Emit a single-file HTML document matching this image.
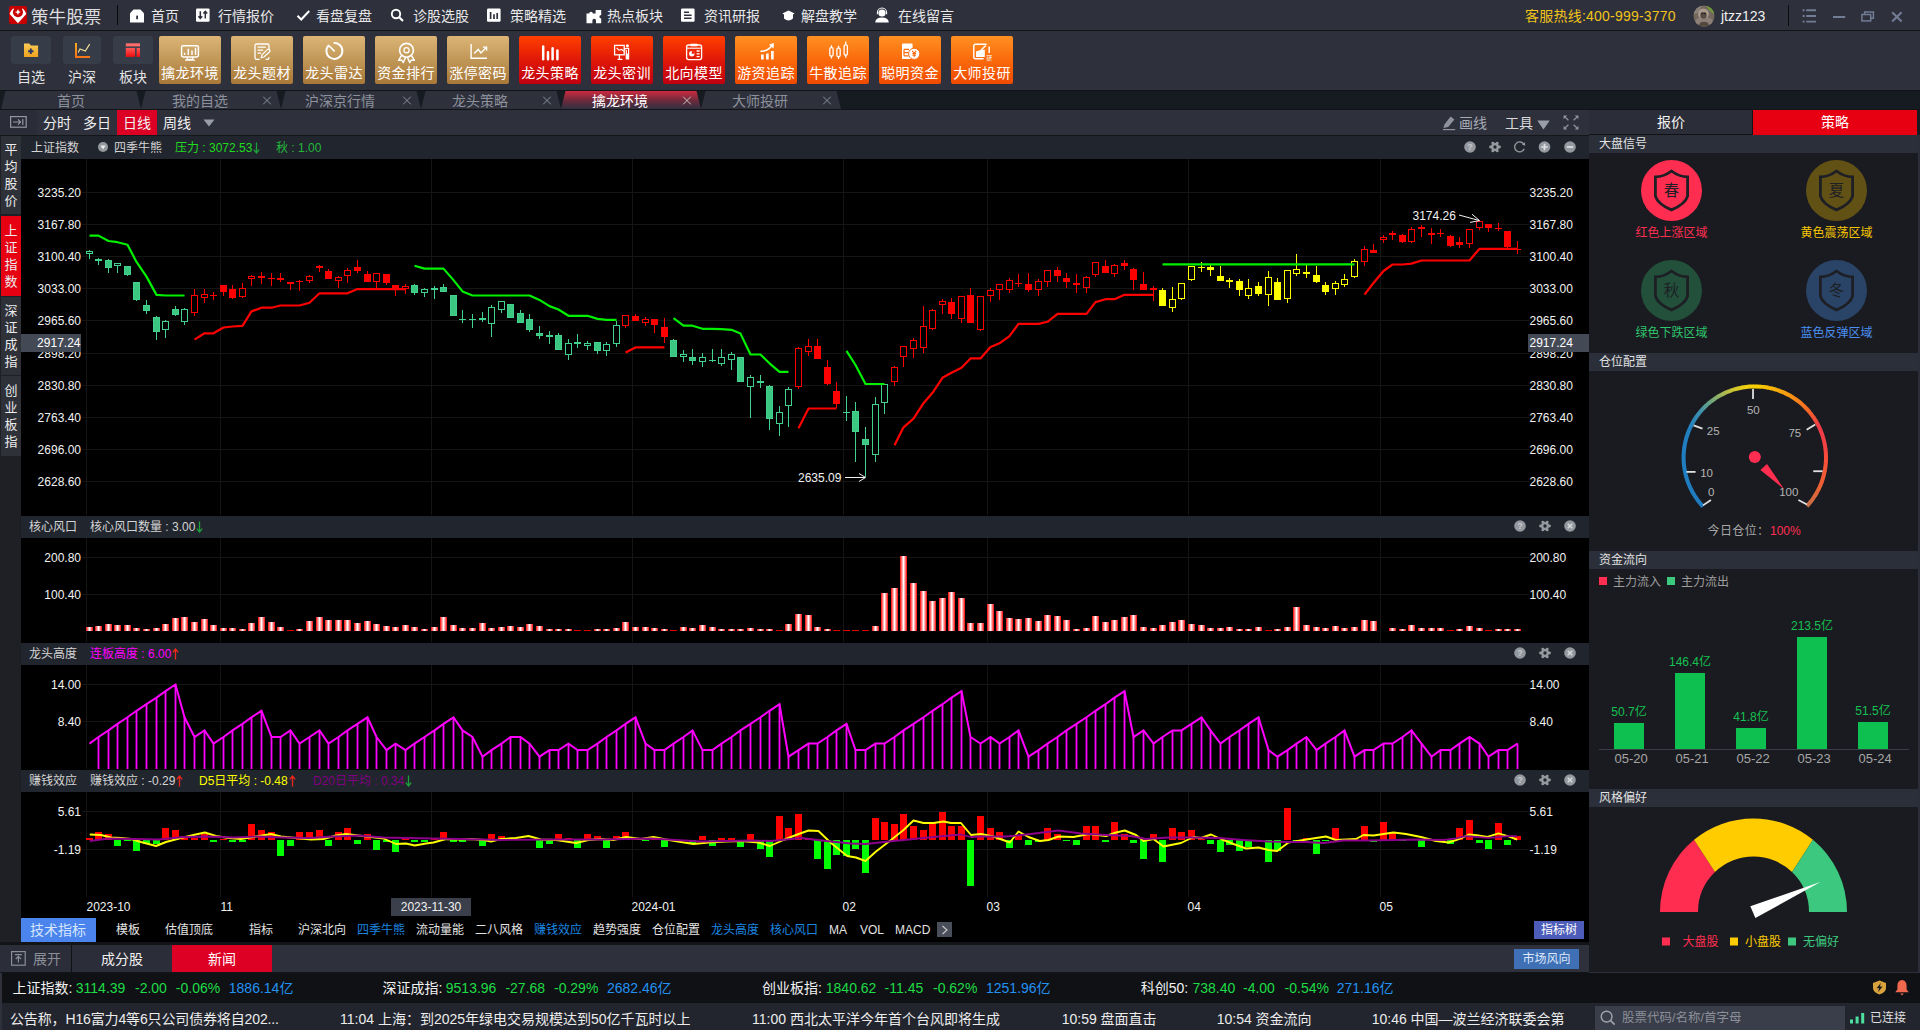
<!DOCTYPE html>
<html lang="zh-CN"><head><meta charset="utf-8"><title>策牛股票</title>
<style>
*{box-sizing:border-box;margin:0;padding:0}
html,body{width:1920px;height:1030px;overflow:hidden;background:#2e303c}
body{font-family:"Liberation Sans","Noto Sans CJK SC",sans-serif;font-size:12px;color:#e6e6e6;position:relative}
.a{position:absolute;white-space:nowrap}
svg{position:absolute;overflow:visible}
svg text{font-family:"Liberation Sans","Noto Sans CJK SC",sans-serif}

#tb{left:0;top:0;width:1920px;height:30px;background:#2e303c}
#tbl{left:0;top:30px;width:1920px;height:1px;background:#121317}
.mi{top:0;height:30px;line-height:32px;font-size:14px;color:#e8e8e8}
#brand{left:31px;top:1px;height:30px;line-height:32px;font-size:17.5px;color:#dcdcdc;font-weight:400;letter-spacing:0.1px}
#tool{left:0;top:31px;width:1920px;height:59px;background:#2e303c}
.sb{top:36px;height:27.6px;background:#363c48;border-radius:3px}
.sl{top:67px;height:20px;line-height:20px;font-size:14px;color:#e2e2e2;text-align:center}
.bb{top:36px;width:62px;height:48px;border-radius:2px}
.bb span{position:absolute;left:-4px;right:-4px;top:27px;height:20px;line-height:20px;text-align:center;font-size:14px;color:#fff;letter-spacing:0.4px}
.gold{background:linear-gradient(#dcb576,#c39a5a 45%,#a87838)}
.red{background:linear-gradient(#ff4000,#e01808 50%,#c00010)}
.org{background:linear-gradient(#ff9022,#fa6a0c 50%,#f04a00)}
#tabs{left:0;top:90px;width:1920px;height:20px;background:#161a21}
#tabs .tt{position:absolute;top:1px;height:18px;line-height:20px;font-size:14px;color:#8c919b;text-align:center;width:120px}
#pb{left:0;top:110px;width:1589px;height:25px;background:#2e303c}
#pbl{left:0;top:135px;width:1589px;height:1px;background:#14161a}
.pt{top:110px;height:25px;line-height:26px;font-size:14px;color:#f0f0f0}

#lstrip{left:0;top:136px;width:21px;height:809px;background:#1e2026}
.ls{left:1px;width:20px;font-size:13px;line-height:17px;text-align:center;color:#ececec;white-space:normal;display:flex;align-items:center;justify-content:center}
.ch{left:21px;width:1568px;height:22px;background:#21252d;line-height:22px;font-size:12px;color:#d4d4d4}
.ch span{position:absolute;top:0}
.ch .ar{position:static;vertical-align:-2px;margin-left:1px}
.blk{left:21px;width:1568px;background:#000}
.ind{top:918px;height:24px;line-height:24px;font-size:12px;color:#e4e4e4}

#rp{left:1589px;top:110px;width:331px;height:863px;background:#1a1b20}
.rh{left:1589px;width:329px;height:18px;background:#2b2f39;line-height:18px;font-size:12px;color:#e2e2e2;padding-left:10px}
.sg{width:120px;text-align:center;font-size:12px;height:16px;line-height:16px}
.rt{font-size:12px;height:16px;line-height:16px}

#bt{left:0;top:942px;width:1589px;height:31px;background:#121418}
#btb{left:0;top:945px;width:1589px;height:27px;background:#2e303c}
#ib{left:0;top:973px;width:1920px;height:30px;background:#0f1115}
#tk{left:0;top:1003px;width:1920px;height:27px;background:#22252e}
.it{top:973px;height:30px;line-height:30px;font-size:14px}
.tk{top:1005px;height:27px;line-height:28px;font-size:14px;color:#ececec}
</style></head>
<body>
<div class="a" id="tb"></div><div class="a" id="tbl"></div>
<svg style="left:9px;top:6px" width="18" height="18" viewBox="0 0 18 18"><rect width="18" height="18" rx="2.2" fill="#c90000"/><path d="M4.3 2.2C2.4 4 0.9 6.2 0.63 8.1L8.96 17.3L17.3 8.1C17 6.2 15.5 4 13.6 2.2L12.6 4L8.96 6L5.3 4Z" fill="#fff"/><circle cx="8.96" cy="6.3" r="5" fill="#c90000"/><path d="M8.96 3.1L9.9 5.15L11.95 6.1L9.9 7.05L8.96 9.1L8.02 7.05L5.97 6.1L8.02 5.15Z" fill="#fff"/></svg>
<div class="a" id="brand">策牛股票</div>
<div class="a" style="left:117px;top:5px;width:1px;height:20px;background:#08090b"></div>
<div class="a mi" style="left:151px">首页</div>
<div class="a mi" style="left:218px">行情报价</div>
<div class="a mi" style="left:316px">看盘复盘</div>
<div class="a mi" style="left:413px">诊股选股</div>
<div class="a mi" style="left:510px">策略精选</div>
<div class="a mi" style="left:607px">热点板块</div>
<div class="a mi" style="left:704px">资讯研报</div>
<div class="a mi" style="left:801px">解盘教学</div>
<div class="a mi" style="left:898px">在线留言</div>
<svg style="left:129px;top:8px" width="16" height="16" viewBox="0 0 16 16"><path d="M1 14.6V5.2L4.6 1.4H11.4L15 5.2V14.6Z" fill="#fff"/><rect x="7.2" y="7.6" width="1.8" height="3.6" fill="#2e303c"/></svg>
<svg style="left:196px;top:8px" width="14" height="14" viewBox="0 0 14 14"><rect x="0" y="0.5" width="13.6" height="13.2" rx="1.2" fill="#fff"/><path d="M4.3 3.2V10 M2.4 8.2L4.3 10.4L6.2 8.2 M9.3 10.6V3.8 M7.4 5.6L9.3 3.4L11.2 5.6" stroke="#2e303c" stroke-width="1.5" fill="none"/></svg>
<svg style="left:296px;top:9px" width="15" height="13" viewBox="0 0 15 13"><path d="M1.5 6.8L5.2 10.4L13.2 2" stroke="#fff" stroke-width="2.1" fill="none"/></svg>
<svg style="left:390px;top:8px" width="15" height="15" viewBox="0 0 15 15"><circle cx="6" cy="6" r="4.2" stroke="#fff" stroke-width="1.9" fill="none"/><path d="M9.2 9.2L13 13" stroke="#fff" stroke-width="2.2"/></svg>
<svg style="left:487px;top:8px" width="14" height="14" viewBox="0 0 14 14"><rect x="0" y="0.5" width="13.6" height="13.2" rx="1.2" fill="#fff"/><path d="M3.6 4V11 M7 6.2V11 M10.2 5V11" stroke="#2e303c" stroke-width="1.7"/></svg>
<svg style="left:586px;top:8px" width="16" height="16" viewBox="0 0 16 16"><path d="M0.5 5.5H3.2 A1.8 1.8 0 1 1 6.8 5.5 H9.6 V2 H15.2 V7 A1.8 1.8 0 1 0 15.2 10.6 V15.2 H10 V12.6 A1.8 1.8 0 1 0 6.4 12.6 V15.2 H0.5Z" fill="#fff"/></svg>
<svg style="left:681px;top:8px" width="14" height="14" viewBox="0 0 14 14"><rect x="0" y="0.5" width="13.6" height="13.2" rx="1.2" fill="#fff"/><path d="M3 4.2H8 M3 7.2H10.6 M3 10.2H10.6" stroke="#2e303c" stroke-width="1.6"/></svg>
<svg style="left:782px;top:10px" width="13" height="12" viewBox="0 0 13 12"><path d="M0.3 3.6L6.5 0.6L12.7 3.6L11 4.6V8.6Q6.5 12.6 2 8.6V4.6Z" fill="#fff"/></svg>
<svg style="left:874px;top:8px" width="16" height="15" viewBox="0 0 16 15"><circle cx="8" cy="5" r="3.6" fill="#fff"/><path d="M1.2 14.4Q1.6 9.6 8 9.6Q14.4 9.6 14.8 14.4Z" fill="#fff"/><path d="M3.4 6.2V4.6A4.6 4.6 0 0 1 12.6 4.6V6.2" stroke="#fff" stroke-width="1.1" fill="none"/></svg>
<div class="a mi" style="left:1525px;color:#f2c41a;letter-spacing:0.22px">客服热线:400-999-3770</div>
<svg style="left:1693px;top:5px" width="22" height="22" viewBox="0 0 22 22"><defs><clipPath id="avc"><circle cx="11" cy="11" r="10.5"/></clipPath></defs><g clip-path="url(#avc)"><rect width="22" height="22" fill="#75695f"/><path d="M13 0H22V9Q17 8 13 0Z" fill="#6f9838"/><path d="M0 0H9L6 7L0 10Z" fill="#8a8178"/><ellipse cx="10.5" cy="9" rx="5.4" ry="5.6" fill="#a89a8c"/><ellipse cx="10.5" cy="10.4" rx="3.2" ry="3.4" fill="#5a4c44"/><path d="M1 22Q2 12 7 13Q11 17 15 13Q20 12 21 22Z" fill="#8c8078"/><path d="M5 22Q7 16 11 17Q15 16 17 22Z" fill="#54483f"/><circle cx="9" cy="8.6" r="0.8" fill="#1e1a18"/><circle cx="12" cy="8.6" r="0.8" fill="#1e1a18"/></g></svg>
<div class="a mi" style="left:1721px;color:#f0f0f0">jtzz123</div>
<div class="a" style="left:1788px;top:5px;width:1px;height:21px;background:#0c0d10"></div>
<svg style="left:1802px;top:9px" width="15" height="14" viewBox="0 0 15 14"><path d="M0.6 1.2H2.6 M4.2 1.2H14 M0.6 7H2.6 M4.2 7H14 M0.6 12.6H2.6 M4.2 12.6H14" stroke="#727c94" stroke-width="1.9"/></svg>
<svg style="left:1833px;top:15.5px" width="13" height="3"><rect width="12.2" height="2" fill="#727c94"/></svg>
<svg style="left:1861px;top:10.5px" width="14" height="12" viewBox="0 0 14 12"><path d="M3.6 3V0.9H12.4V7.2H10" stroke="#727c94" stroke-width="1.5" fill="none"/><rect x="0.9" y="3.5" width="8.8" height="6.4" stroke="#727c94" stroke-width="1.5" fill="none"/></svg>
<svg style="left:1891px;top:10.5px" width="12" height="12" viewBox="0 0 12 12"><path d="M1.2 1.2L10.6 10.6M10.6 1.2L1.2 10.6" stroke="#727c94" stroke-width="2.1"/></svg>
<div class="a" id="tool"></div>
<div class="a sb" style="left:11.3px;width:39.7px"></div>
<div class="a sb" style="left:63px;width:38px"></div>
<div class="a sb" style="left:113.2px;width:39.7px"></div>
<div class="a sl" style="left:11px;width:40px">自选</div>
<div class="a sl" style="left:63px;width:38px">沪深</div>
<div class="a sl" style="left:113px;width:40px">板块</div>
<svg style="left:0;top:31px" width="160" height="59"><defs><linearGradient id="fg" x1="0" y1="0" x2="0" y2="1"><stop offset="0" stop-color="#f9cc58"/><stop offset="1" stop-color="#f0a21e"/></linearGradient><linearGradient id="og" x1="0" y1="0" x2="0" y2="1"><stop offset="0" stop-color="#f8ac20"/><stop offset="1" stop-color="#f87416"/></linearGradient><linearGradient id="rg" x1="0" y1="0" x2="0" y2="1"><stop offset="0" stop-color="#ff5a5a"/><stop offset="1" stop-color="#ee0c0c"/></linearGradient></defs><path d="M24 12.4H29.2L31 14.4H38.1V26H24Z" fill="url(#fg)"/><path d="M30.8 17.6V23M28.1 20.3H33.5" stroke="#2a3762" stroke-width="1.9"/><path d="M76 11.9V26H90.1" stroke="url(#og)" stroke-width="2" fill="none"/><path d="M78.2 21.6L80 18L85.3 20L89.7 13.1" stroke="#f0dc92" stroke-width="1.2" fill="none"/><rect x="125.8" y="12.3" width="14.2" height="3.1" fill="#ff6c6c"/><rect x="125.8" y="16.9" width="9.3" height="9" fill="url(#rg)"/><rect x="136.6" y="16.9" width="3.4" height="9" fill="url(#rg)"/></svg>
<div class="a bb gold" style="left:159px"><svg style="left:0;top:0" width="62" height="48" viewBox="0 0 62 48" fill="none" stroke="#fff" stroke-width="1.5"><rect x="22.6" y="9.7" width="16.8" height="11.2" rx="1.6"/><path d="M28.2 21V23.4H33.8V21M26 24.2H36" stroke-width="1.3"/><path d="M25.6 18.9V16.8M29.3 18.9V12.8M33 18.9V14.4M36.5 18.9V11.8" stroke-width="1.5"/></svg><span>擒龙环境</span></div>
<div class="a bb gold" style="left:231px"><svg style="left:0;top:0" width="62" height="48" viewBox="0 0 62 48" fill="none" stroke="#fff" stroke-width="1.5"><path d="M38 14.6V9.6Q38 8 36.4 8H25.6Q24 8 24 9.6V21.8Q24 23.4 25.6 23.4H28.6M34.6 23.4H36.4Q38 23.4 38 21.8V21.2" stroke-width="1.3"/><path d="M26.6 11.2H34.8M26.6 14.2H32.2M26.6 17.2H30" stroke-width="1.3"/><path d="M30.2 21.6L31 18.8L36.6 13.4Q37.4 12.8 38.2 13.6L38.8 14.2Q39.4 15 38.6 15.8L33 21Z" stroke-width="1.2" fill="#c9a05e"/></svg><span>龙头题材</span></div>
<div class="a bb gold" style="left:303px"><svg style="left:0;top:0" width="62" height="48" viewBox="0 0 62 48" fill="none" stroke="#fff" stroke-width="1.5"><path d="M31.3 6.9A8 8 0 1 1 25.4 9.6" stroke-width="1.9" stroke-linecap="round"/><path d="M26.2 10L31.2 14.8" stroke-width="1.7" stroke-linecap="round"/></svg><span>龙头雷达</span></div>
<div class="a bb gold" style="left:375px"><svg style="left:0;top:0" width="62" height="48" viewBox="0 0 62 48" fill="none" stroke="#fff" stroke-width="1.5"><circle cx="31.5" cy="14.3" r="6.9" stroke-width="1.6"/><circle cx="31.5" cy="14.3" r="2.6" stroke-width="1.2"/><path d="M26.6 19.4L23.6 24.4L26.8 24L28.2 26.6L30.6 21.4M36.4 19.4L39.4 24.4L36.2 24L34.8 26.6L32.4 21.4" stroke-width="1.4" stroke-linejoin="round"/></svg><span>资金排行</span></div>
<div class="a bb gold" style="left:447px"><svg style="left:0;top:0" width="62" height="48" viewBox="0 0 62 48" fill="none" stroke="#fff" stroke-width="1.5"><path d="M24.1 8V22.3H40" stroke-width="1.4"/><path d="M27.2 17.4L31.2 13.4L34 17L39.2 11.6" stroke-width="1.4"/><path d="M36 11.2L39.6 11.2L39.6 14.8" stroke-width="1.3"/></svg><span>涨停密码</span></div>
<div class="a bb red" style="left:519px"><svg style="left:0;top:0" width="62" height="48" viewBox="0 0 62 48" fill="none" stroke="#fff" stroke-width="1.5"><path d="M24.2 10.4V23.3M29 16.2V23.3M33.6 12.2V23.3M38.4 14.6V23.3" stroke-width="2.5" stroke-linecap="round"/></svg><span>龙头策略</span></div>
<div class="a bb red" style="left:591px"><svg style="left:0;top:0" width="62" height="48" viewBox="0 0 62 48" fill="none" stroke="#fff" stroke-width="1.5"><rect x="23.6" y="9.4" width="9.6" height="9.4" stroke-width="1.3"/><path d="M28.4 18.8V23M26.6 23.3H31.4" stroke-width="1.3"/><path d="M25.6 11.8L28 14.2L30.6 13.4L32.8 15.2" stroke-width="1.1"/><circle cx="36.4" cy="9.8" r="1.5" fill="#fff" stroke="none"/><path d="M33 13.4L35.2 12.4H37.6V23.4M35.3 14V23.4M36.4 17.6V23.4" stroke-width="1.2"/></svg><span>龙头密训</span></div>
<div class="a bb red" style="left:663px"><svg style="left:0;top:0" width="62" height="48" viewBox="0 0 62 48" fill="none" stroke="#fff" stroke-width="1.5"><rect x="23.6" y="9" width="15" height="14.6" rx="2" stroke-width="1.3"/><path d="M27.8 8.2H34.2V9.8H27.8Z" fill="#fff" stroke-width="1"/><path d="M23.6 12.2H38.6" stroke-width="1.1"/><circle cx="28.8" cy="17.8" r="2.7" fill="#fff" stroke="none"/><path d="M28.8 17.8V15.1A2.7 2.7 0 0 1 31.5 17.8Z" fill="#e61a08" stroke="none"/><path d="M33.6 15H36.6M33.6 17.8H36.6M33.6 20.6H36.6" stroke-width="1.3"/></svg><span>北向模型</span></div>
<div class="a bb org" style="left:735px"><svg style="left:0;top:0" width="62" height="48" viewBox="0 0 62 48" fill="none" stroke="#fff" stroke-width="1.5"><path d="M27.4 18.6V23.4M32.4 17.4V23.4M37.4 15V23.4" stroke-width="2.6"/><path d="M25.4 15.2Q32 15.6 37.2 9.4" stroke-width="1.5"/><path d="M34.6 8.8L38.6 7.6L38.2 11.8Z" fill="#fff" stroke-width="0.8"/></svg><span>游资追踪</span></div>
<div class="a bb org" style="left:807px"><svg style="left:0;top:0" width="62" height="48" viewBox="0 0 62 48" fill="none" stroke="#fff" stroke-width="1.5"><rect x="22.8" y="11.6" width="3.3" height="8.4" rx="1.3" stroke-width="1.3"/><path d="M24.45 9.2V11.6M24.45 20V22.4" stroke-width="1.3"/><rect x="29.9" y="12.2" width="3.3" height="8.4" rx="1.3" stroke-width="1.3"/><path d="M31.55 9.8V12.2M31.55 20.6V23" stroke-width="1.3"/><rect x="37.1" y="8.8" width="3.3" height="10.2" rx="1.3" stroke-width="1.3"/><path d="M38.75 5.4V8.8M38.75 19V21.8" stroke-width="1.3"/></svg><span>牛散追踪</span></div>
<div class="a bb org" style="left:879px"><svg style="left:0;top:0" width="62" height="48" viewBox="0 0 62 48" fill="none" stroke="#fff" stroke-width="1.5"><path d="M23 8.6Q23 7.6 24 7.6H32.6Q33.6 7.6 33.6 8.6V23H23Z" fill="#fff" stroke="none"/><path d="M25 13.4H30M25 16.6H29.4M25 19.8H29.4M25 13.4V19.8" stroke="#fb6c12" stroke-width="1.2"/><circle cx="35.2" cy="17.8" r="5.6" fill="#fff" stroke="#fb6c12" stroke-width="1"/><path d="M33.2 14.8L35.2 17.4L37.2 14.8M35.2 17.4V21.2M33.4 17.6H37M33.4 19.2H37" stroke="#fb6c12" stroke-width="1.1"/></svg><span>聪明资金</span></div>
<div class="a bb org" style="left:951px"><svg style="left:0;top:0" width="62" height="48" viewBox="0 0 62 48" fill="none" stroke="#fff" stroke-width="1.5"><path d="M35.6 8.2H24.6Q22.8 8.2 22.8 10V21Q22.8 22.8 24.6 22.8H32.6M38.2 10.6V17" stroke-width="1.4"/><path d="M25 21V15.4L30 13.8H33.8V21Z" fill="#fff" stroke="none"/><path d="M30.2 14L34.8 9.6" stroke-width="1.4"/><text x="35.4" y="23.6" font-size="5.6" fill="#fff" stroke="none">研</text></svg><span>大师投研</span></div>
<div class="a" id="tabs"><svg style="left:0;top:0" width="1920" height="20">
<defs><linearGradient id="atg" x1="0" y1="0" x2="0" y2="1"><stop offset="0" stop-color="#cc2a40"/><stop offset="0.55" stop-color="#6a2a3c"/><stop offset="1" stop-color="#2f3040"/></linearGradient></defs>
<polygon points="5.5,1 136.5,1 141,19 1,19" fill="#2e303c"/>
<polygon points="145.5,1 276.5,1 281,19 141,19" fill="#2e303c"/>
<polygon points="285.5,1 416.5,1 421,19 281,19" fill="#2e303c"/>
<polygon points="425.5,1 556.5,1 561,19 421,19" fill="#2e303c"/>
<polygon points="565.5,1 696.5,1 701,19 561,19" fill="url(#atg)"/>
<polygon points="705.5,1 836.5,1 841,19 701,19" fill="#2e303c"/>
<rect x="0" y="0" width="1920" height="1" fill="#111317"/><rect x="0" y="19" width="1920" height="1" fill="#111317"/>
<path d="M263.2 6.7L270.8 14.3M270.8 6.7L263.2 14.3" stroke="#8c919b" stroke-width="1"/>
<path d="M403.2 6.7L410.8 14.3M410.8 6.7L403.2 14.3" stroke="#8c919b" stroke-width="1"/>
<path d="M543.2 6.7L550.8 14.3M550.8 6.7L543.2 14.3" stroke="#8c919b" stroke-width="1"/>
<path d="M683.2 6.7L690.8 14.3M690.8 6.7L683.2 14.3" stroke="#c8c8c8" stroke-width="1"/>
<path d="M823.2 6.7L830.8 14.3M830.8 6.7L823.2 14.3" stroke="#8c919b" stroke-width="1"/>
</svg>
<div class="tt" style="left:11px;">首页</div>
<div class="tt" style="left:140px;">我的自选</div>
<div class="tt" style="left:280px;">沪深京行情</div>
<div class="tt" style="left:420px;">龙头策略</div>
<div class="tt" style="left:560px;color:#fff;">擒龙环境</div>
<div class="tt" style="left:700px;">大师投研</div>
</div>
<div class="a" id="pb"></div><div class="a" id="pbl"></div>
<div class="a" style="left:0;top:110px;width:37px;height:25px;background:#2a2c37"></div>
<svg style="left:10px;top:116px" width="17" height="12" viewBox="0 0 17 12"><rect x="0.6" y="0.6" width="15.6" height="10.6" fill="none" stroke="#9498a2" stroke-width="1.2"/><path d="M3 6H10.4M8 3.4L10.6 6L8 8.6M12.8 3V9" stroke="#9498a2" stroke-width="1.2" fill="none"/></svg>
<div class="a" style="left:117px;top:110px;width:40px;height:25px;background:#dc0024"></div>
<div class="a pt" style="left:43px">分时</div>
<div class="a pt" style="left:83px">多日</div>
<div class="a pt" style="left:123px">日线</div>
<div class="a pt" style="left:163px">周线</div>
<svg style="left:203px;top:119px" width="12" height="8"><path d="M0.5 0.5H11.5L6 7.5Z" fill="#9a9ea8"/></svg>
<svg style="left:0;top:0" width="1920" height="140"><path d="M1443.4 128L1444.6 124.2L1450.6 116.6L1454.4 119.6L1448.2 127Z" fill="#8e929c"/><path d="M1443 129.6H1455.2" stroke="#8e929c" stroke-width="1.2"/></svg>
<div class="a pt" style="left:1459px;color:#a6aab2">画线</div>
<div class="a pt" style="left:1505px;color:#d8d8d8">工具</div>
<svg style="left:1537px;top:120px" width="13" height="10"><path d="M0.3 0.5H12.7L6.5 9.5Z" fill="#9a9ea8"/></svg>
<svg style="left:1563px;top:115px" width="16" height="15" viewBox="0 0 16 15"><path d="M1 1L5.4 5.2M15 1L10.6 5.2M1 14L5.4 9.8M15 14L10.6 9.8" stroke="#8e929c" stroke-width="1.2"/><path d="M0.6 0.6H4.2L0.6 4.2ZM15.4 0.6H11.8L15.4 4.2ZM0.6 14.4H4.2L0.6 10.8ZM15.4 14.4H11.8L15.4 10.8Z" fill="#8e929c"/></svg><div class="a" id="lstrip"></div>
<div class="a ls" style="top:136px;height:78px;padding-bottom:0;background:#2f3139"><div>平<br>均<br>股<br>价</div></div>
<div class="a ls" style="top:216px;height:80px;padding-bottom:0;background:#e60012"><div>上<br>证<br>指<br>数</div></div>
<div class="a ls" style="top:297px;height:78px;padding-bottom:0;background:#2f3139"><div>深<br>证<br>成<br>指</div></div>
<div class="a ls" style="top:376px;height:80px;padding-bottom:0;background:#2f3139"><div>创<br>业<br>板<br>指</div></div>
<div class="a blk" style="top:159px;height:357px"></div>
<div class="a blk" style="top:538px;height:105px"></div>
<div class="a blk" style="top:665px;height:105px"></div>
<div class="a blk" style="top:792px;height:153px"></div>
<div class="a ch" style="top:136px;height:23px;line-height:25px"><span style="left:10px">上证指数</span><span style="left:93px">四季牛熊</span><span style="left:154px;color:#1fdc1f">压力 : 3072.53<svg class="ar" width="7" height="12" viewBox="0 0 7 12"><path d="M3.5 0.5V10.5M0.8 7.6L3.5 11L6.2 7.6" stroke="#1fa03c" stroke-width="1.3" fill="none"/></svg></span><span style="left:255px;color:#22b83c">秋 : 1.00</span></div>
<div class="a ch" style="top:516px"><span style="left:8px">核心风口</span><span style="left:69px">核心风口数量 : 3.00<svg class="ar" width="7" height="12" viewBox="0 0 7 12"><path d="M3.5 0.5V10.5M0.8 7.6L3.5 11L6.2 7.6" stroke="#1fa03c" stroke-width="1.3" fill="none"/></svg></span></div>
<div class="a ch" style="top:643px"><span style="left:8px">龙头高度</span><span style="left:69px;color:#ff00ff">连板高度 : 6.00<svg class="ar" width="7" height="12" viewBox="0 0 7 12"><path d="M3.5 11.5V1.5M0.8 4.4L3.5 1L6.2 4.4" stroke="#f0281c" stroke-width="1.3" fill="none"/></svg></span></div>
<div class="a ch" style="top:770px"><span style="left:8px">赚钱效应</span><span style="left:69px">赚钱效应 : -0.29<svg class="ar" width="7" height="12" viewBox="0 0 7 12"><path d="M3.5 11.5V1.5M0.8 4.4L3.5 1L6.2 4.4" stroke="#f0281c" stroke-width="1.3" fill="none"/></svg></span><span style="left:178px;color:#ffff00">D5日平均 : -0.48<svg class="ar" width="7" height="12" viewBox="0 0 7 12"><path d="M3.5 11.5V1.5M0.8 4.4L3.5 1L6.2 4.4" stroke="#f0281c" stroke-width="1.3" fill="none"/></svg></span><span style="left:292px;color:#800080">D20日平均 : 0.34<svg class="ar" width="7" height="12" viewBox="0 0 7 12"><path d="M3.5 0.5V10.5M0.8 7.6L3.5 11L6.2 7.6" stroke="#1fa03c" stroke-width="1.3" fill="none"/></svg></span></div>
<svg style="left:0;top:0" width="1920" height="1030"><circle cx="103" cy="147" r="5" fill="#94989f"/><path d="M100.4 145.6H105.6L103 149.4Z" fill="#ececec"/><circle cx="1470" cy="147" r="5.8" fill="#94989f"/><text x="1470" y="150.4" font-size="9" font-weight="bold" fill="#c8cbd0" text-anchor="middle">?</text><circle cx="1495" cy="147" r="2.9" fill="none" stroke="#94989f" stroke-width="2.5"/><circle cx="1499.50" cy="147.00" r="1.45" fill="#94989f"/><circle cx="1497.25" cy="150.90" r="1.45" fill="#94989f"/><circle cx="1492.75" cy="150.90" r="1.45" fill="#94989f"/><circle cx="1490.50" cy="147.00" r="1.45" fill="#94989f"/><circle cx="1492.75" cy="143.10" r="1.45" fill="#94989f"/><circle cx="1497.25" cy="143.10" r="1.45" fill="#94989f"/><path d="M1524.1 144.6A5 5 0 1 0 1524.3 148.8" fill="none" stroke="#94989f" stroke-width="1.3"/><path d="M1521.9 144.8L1525.3 145.8L1524.9 142.2Z" fill="#94989f"/><circle cx="1544.5" cy="147" r="5.8" fill="#94989f"/><path d="M1541.3 147H1547.7M1544.5 143.8V150.2" stroke="#dfe1e5" stroke-width="1.7"/><circle cx="1570" cy="147" r="5.8" fill="#94989f"/><path d="M1566.8 147H1573.2" stroke="#dfe1e5" stroke-width="1.7"/><circle cx="1520" cy="526" r="5.8" fill="#94989f"/><text x="1520" y="529.4" font-size="9" font-weight="bold" fill="#c8cbd0" text-anchor="middle">?</text><circle cx="1545" cy="526" r="2.9" fill="none" stroke="#94989f" stroke-width="2.5"/><circle cx="1549.50" cy="526.00" r="1.45" fill="#94989f"/><circle cx="1547.25" cy="529.90" r="1.45" fill="#94989f"/><circle cx="1542.75" cy="529.90" r="1.45" fill="#94989f"/><circle cx="1540.50" cy="526.00" r="1.45" fill="#94989f"/><circle cx="1542.75" cy="522.10" r="1.45" fill="#94989f"/><circle cx="1547.25" cy="522.10" r="1.45" fill="#94989f"/><circle cx="1570" cy="526" r="5.8" fill="#94989f"/><path d="M1567.7 523.7L1572.3 528.3M1572.3 523.7L1567.7 528.3" stroke="#d8dade" stroke-width="1.4"/><circle cx="1520" cy="653" r="5.8" fill="#94989f"/><text x="1520" y="656.4" font-size="9" font-weight="bold" fill="#c8cbd0" text-anchor="middle">?</text><circle cx="1545" cy="653" r="2.9" fill="none" stroke="#94989f" stroke-width="2.5"/><circle cx="1549.50" cy="653.00" r="1.45" fill="#94989f"/><circle cx="1547.25" cy="656.90" r="1.45" fill="#94989f"/><circle cx="1542.75" cy="656.90" r="1.45" fill="#94989f"/><circle cx="1540.50" cy="653.00" r="1.45" fill="#94989f"/><circle cx="1542.75" cy="649.10" r="1.45" fill="#94989f"/><circle cx="1547.25" cy="649.10" r="1.45" fill="#94989f"/><circle cx="1570" cy="653" r="5.8" fill="#94989f"/><path d="M1567.7 650.7L1572.3 655.3M1572.3 650.7L1567.7 655.3" stroke="#d8dade" stroke-width="1.4"/><circle cx="1520" cy="780" r="5.8" fill="#94989f"/><text x="1520" y="783.4" font-size="9" font-weight="bold" fill="#c8cbd0" text-anchor="middle">?</text><circle cx="1545" cy="780" r="2.9" fill="none" stroke="#94989f" stroke-width="2.5"/><circle cx="1549.50" cy="780.00" r="1.45" fill="#94989f"/><circle cx="1547.25" cy="783.90" r="1.45" fill="#94989f"/><circle cx="1542.75" cy="783.90" r="1.45" fill="#94989f"/><circle cx="1540.50" cy="780.00" r="1.45" fill="#94989f"/><circle cx="1542.75" cy="776.10" r="1.45" fill="#94989f"/><circle cx="1547.25" cy="776.10" r="1.45" fill="#94989f"/><circle cx="1570" cy="780" r="5.8" fill="#94989f"/><path d="M1567.7 777.7L1572.3 782.3M1572.3 777.7L1567.7 782.3" stroke="#d8dade" stroke-width="1.4"/></svg>
<svg style="left:0;top:0" width="1920" height="1030" shape-rendering="crispEdges"><path d="M86.5 159V515" stroke="#151515" stroke-width="1"/><path d="M220.5 159V515" stroke="#151515" stroke-width="1"/><path d="M431.5 159V515" stroke="#151515" stroke-width="1"/><path d="M632.5 159V515" stroke="#151515" stroke-width="1"/><path d="M843.5 159V515" stroke="#151515" stroke-width="1"/><path d="M987.5 159V515" stroke="#151515" stroke-width="1"/><path d="M1188.5 159V515" stroke="#151515" stroke-width="1"/><path d="M1380.5 159V515" stroke="#151515" stroke-width="1"/><path d="M82 192.5H1529" stroke="#151515" stroke-width="1"/><path d="M82 224.5H1529" stroke="#151515" stroke-width="1"/><path d="M82 256.5H1529" stroke="#151515" stroke-width="1"/><path d="M82 288.5H1529" stroke="#151515" stroke-width="1"/><path d="M82 320.5H1529" stroke="#151515" stroke-width="1"/><path d="M82 353.5H1529" stroke="#151515" stroke-width="1"/><path d="M82 385.5H1529" stroke="#151515" stroke-width="1"/><path d="M82 417.5H1529" stroke="#151515" stroke-width="1"/><path d="M82 449.5H1529" stroke="#151515" stroke-width="1"/><path d="M82 481.5H1529" stroke="#151515" stroke-width="1"/><g shape-rendering="auto"><text x="81" y="196.9" font-size="12" fill="#f2f2f2" text-anchor="end">3235.20</text><text x="1529.5" y="196.9" font-size="12" fill="#f2f2f2">3235.20</text><text x="81" y="228.9" font-size="12" fill="#f2f2f2" text-anchor="end">3167.80</text><text x="1529.5" y="228.9" font-size="12" fill="#f2f2f2">3167.80</text><text x="81" y="260.9" font-size="12" fill="#f2f2f2" text-anchor="end">3100.40</text><text x="1529.5" y="260.9" font-size="12" fill="#f2f2f2">3100.40</text><text x="81" y="292.9" font-size="12" fill="#f2f2f2" text-anchor="end">3033.00</text><text x="1529.5" y="292.9" font-size="12" fill="#f2f2f2">3033.00</text><text x="81" y="324.9" font-size="12" fill="#f2f2f2" text-anchor="end">2965.60</text><text x="1529.5" y="324.9" font-size="12" fill="#f2f2f2">2965.60</text><text x="81" y="357.9" font-size="12" fill="#f2f2f2" text-anchor="end">2898.20</text><text x="1529.5" y="357.9" font-size="12" fill="#f2f2f2">2898.20</text><text x="81" y="389.9" font-size="12" fill="#f2f2f2" text-anchor="end">2830.80</text><text x="1529.5" y="389.9" font-size="12" fill="#f2f2f2">2830.80</text><text x="81" y="421.9" font-size="12" fill="#f2f2f2" text-anchor="end">2763.40</text><text x="1529.5" y="421.9" font-size="12" fill="#f2f2f2">2763.40</text><text x="81" y="453.9" font-size="12" fill="#f2f2f2" text-anchor="end">2696.00</text><text x="1529.5" y="453.9" font-size="12" fill="#f2f2f2">2696.00</text><text x="81" y="485.9" font-size="12" fill="#f2f2f2" text-anchor="end">2628.60</text><text x="1529.5" y="485.9" font-size="12" fill="#f2f2f2">2628.60</text></g><rect x="21" y="334" width="60" height="18" fill="#444956"/><rect x="1528" y="334" width="61" height="18" fill="#444956"/><g shape-rendering="auto"><text x="80.5" y="347.4" font-size="12" fill="#fff" text-anchor="end">2917.24</text><text x="1529.5" y="347.4" font-size="12" fill="#fff">2917.24</text></g><rect x="89" y="250" width="1" height="9" fill="#43d28d"/><rect x="86.5" y="251.5" width="6" height="2" fill="#000" stroke="#43d28d" stroke-width="1"/><rect x="98" y="258" width="1" height="7" fill="#43d28d"/><rect x="95" y="259" width="7" height="2" fill="#43d28d"/><rect x="108" y="259" width="1" height="14" fill="#43d28d"/><rect x="105.5" y="260.5" width="6" height="7" fill="#3bc781" stroke="#43d28d" stroke-width="1"/><rect x="117" y="263" width="1" height="10" fill="#43d28d"/><rect x="114.5" y="263.5" width="6" height="2" fill="#000" stroke="#43d28d" stroke-width="1"/><rect x="127" y="266" width="1" height="10" fill="#43d28d"/><rect x="124.5" y="266.5" width="6" height="8" fill="#3bc781" stroke="#43d28d" stroke-width="1"/><rect x="136" y="282" width="1" height="19" fill="#43d28d"/><rect x="133.5" y="282.5" width="6" height="17" fill="#3bc781" stroke="#43d28d" stroke-width="1"/><rect x="146" y="300" width="1" height="14" fill="#43d28d"/><rect x="143.5" y="305.5" width="6" height="5" fill="#3bc781" stroke="#43d28d" stroke-width="1"/><rect x="156" y="316" width="1" height="24" fill="#43d28d"/><rect x="153.5" y="317.5" width="6" height="14" fill="#3bc781" stroke="#43d28d" stroke-width="1"/><rect x="165" y="320" width="1" height="18" fill="#43d28d"/><rect x="162.5" y="321.5" width="6" height="8" fill="#000" stroke="#43d28d" stroke-width="1"/><rect x="175" y="306" width="1" height="10" fill="#43d28d"/><rect x="172.5" y="309.5" width="6" height="5" fill="#3bc781" stroke="#43d28d" stroke-width="1"/><rect x="184" y="308" width="1" height="17" fill="#43d28d"/><rect x="181.5" y="309.5" width="6" height="12" fill="#000" stroke="#43d28d" stroke-width="1"/><rect x="194" y="289" width="1" height="27" fill="#ff0000"/><rect x="191.5" y="295.5" width="6" height="17" fill="#000" stroke="#ff0000" stroke-width="1"/><rect x="204" y="289" width="1" height="14" fill="#ff0000"/><rect x="201.5" y="294.5" width="6" height="3" fill="#000" stroke="#ff0000" stroke-width="1"/><rect x="213" y="292" width="1" height="8" fill="#ff0000"/><rect x="210" y="295" width="7" height="1" fill="#ff0000"/><rect x="223" y="285" width="1" height="11" fill="#ff0000"/><rect x="220.5" y="285.5" width="6" height="6" fill="#ff0000" stroke="#ff0000" stroke-width="1"/><rect x="232" y="285" width="1" height="14" fill="#ff0000"/><rect x="229.5" y="289.5" width="6" height="8" fill="#ff0000" stroke="#ff0000" stroke-width="1"/><rect x="242" y="283" width="1" height="15" fill="#ff0000"/><rect x="239.5" y="288.5" width="6" height="8" fill="#000" stroke="#ff0000" stroke-width="1"/><rect x="251" y="275" width="1" height="11" fill="#ff0000"/><rect x="248.5" y="276.5" width="6" height="2" fill="#000" stroke="#ff0000" stroke-width="1"/><rect x="261" y="272" width="1" height="12" fill="#ff0000"/><rect x="258" y="276" width="7" height="2" fill="#ff0000"/><rect x="271" y="273" width="1" height="13" fill="#ff0000"/><rect x="268" y="278" width="7" height="1" fill="#ff0000"/><rect x="280" y="273" width="1" height="9" fill="#ff0000"/><rect x="277" y="278" width="7" height="2" fill="#ff0000"/><rect x="290" y="282" width="1" height="8" fill="#ff0000"/><rect x="287" y="282" width="7" height="2" fill="#ff0000"/><rect x="299" y="280" width="1" height="11" fill="#ff0000"/><rect x="296" y="281" width="7" height="1" fill="#ff0000"/><rect x="309" y="275" width="1" height="8" fill="#ff0000"/><rect x="306.5" y="276.5" width="6" height="4" fill="#000" stroke="#ff0000" stroke-width="1"/><rect x="319" y="265" width="1" height="7" fill="#ff0000"/><rect x="316" y="266" width="7" height="2" fill="#ff0000"/><rect x="328" y="269" width="1" height="10" fill="#ff0000"/><rect x="325.5" y="271.5" width="6" height="7" fill="#ff0000" stroke="#ff0000" stroke-width="1"/><rect x="338" y="276" width="1" height="12" fill="#ff0000"/><rect x="335.5" y="277.5" width="6" height="3" fill="#000" stroke="#ff0000" stroke-width="1"/><rect x="347" y="268" width="1" height="15" fill="#ff0000"/><rect x="344.5" y="270.5" width="6" height="5" fill="#000" stroke="#ff0000" stroke-width="1"/><rect x="357" y="260" width="1" height="13" fill="#ff0000"/><rect x="354.5" y="267.5" width="6" height="3" fill="#ff0000" stroke="#ff0000" stroke-width="1"/><rect x="367" y="271" width="1" height="11" fill="#ff0000"/><rect x="364.5" y="274.5" width="6" height="7" fill="#ff0000" stroke="#ff0000" stroke-width="1"/><rect x="376" y="273" width="1" height="15" fill="#ff0000"/><rect x="373.5" y="273.5" width="6" height="8" fill="#000" stroke="#ff0000" stroke-width="1"/><rect x="386" y="274" width="1" height="11" fill="#ff0000"/><rect x="383.5" y="274.5" width="6" height="8" fill="#ff0000" stroke="#ff0000" stroke-width="1"/><rect x="395" y="285" width="1" height="11" fill="#ff0000"/><rect x="392.5" y="285.5" width="6" height="2" fill="#ff0000" stroke="#ff0000" stroke-width="1"/><rect x="405" y="284" width="1" height="10" fill="#ff0000"/><rect x="402.5" y="286.5" width="6" height="2" fill="#000" stroke="#ff0000" stroke-width="1"/><rect x="414" y="284" width="1" height="11" fill="#43d28d"/><rect x="411.5" y="285.5" width="6" height="7" fill="#3bc781" stroke="#43d28d" stroke-width="1"/><rect x="424" y="288" width="1" height="9" fill="#43d28d"/><rect x="421.5" y="289.5" width="6" height="3" fill="#000" stroke="#43d28d" stroke-width="1"/><rect x="434" y="286" width="1" height="13" fill="#43d28d"/><rect x="431" y="288" width="7" height="2" fill="#43d28d"/><rect x="443" y="284" width="1" height="8" fill="#43d28d"/><rect x="440.5" y="287.5" width="6" height="4" fill="#3bc781" stroke="#43d28d" stroke-width="1"/><rect x="453" y="295" width="1" height="21" fill="#43d28d"/><rect x="450.5" y="295.5" width="6" height="20" fill="#3bc781" stroke="#43d28d" stroke-width="1"/><rect x="462" y="310" width="1" height="13" fill="#43d28d"/><rect x="459" y="319" width="7" height="1" fill="#43d28d"/><rect x="472" y="314" width="1" height="14" fill="#43d28d"/><rect x="469" y="319" width="7" height="1" fill="#43d28d"/><rect x="482" y="312" width="1" height="10" fill="#43d28d"/><rect x="479" y="318" width="7" height="2" fill="#43d28d"/><rect x="491" y="305" width="1" height="32" fill="#43d28d"/><rect x="488.5" y="307.5" width="6" height="16" fill="#000" stroke="#43d28d" stroke-width="1"/><rect x="501" y="301" width="1" height="12" fill="#43d28d"/><rect x="498.5" y="301.5" width="6" height="8" fill="#000" stroke="#43d28d" stroke-width="1"/><rect x="510" y="304" width="1" height="14" fill="#43d28d"/><rect x="507.5" y="304.5" width="6" height="13" fill="#3bc781" stroke="#43d28d" stroke-width="1"/><rect x="520" y="310" width="1" height="13" fill="#43d28d"/><rect x="517.5" y="313.5" width="6" height="9" fill="#3bc781" stroke="#43d28d" stroke-width="1"/><rect x="529" y="314" width="1" height="18" fill="#43d28d"/><rect x="526.5" y="319.5" width="6" height="10" fill="#3bc781" stroke="#43d28d" stroke-width="1"/><rect x="539" y="326" width="1" height="13" fill="#43d28d"/><rect x="536.5" y="333.5" width="6" height="2" fill="#3bc781" stroke="#43d28d" stroke-width="1"/><rect x="549" y="331" width="1" height="13" fill="#43d28d"/><rect x="546" y="335" width="7" height="2" fill="#43d28d"/><rect x="558" y="333" width="1" height="17" fill="#43d28d"/><rect x="555.5" y="335.5" width="6" height="14" fill="#3bc781" stroke="#43d28d" stroke-width="1"/><rect x="568" y="339" width="1" height="21" fill="#43d28d"/><rect x="565.5" y="343.5" width="6" height="11" fill="#000" stroke="#43d28d" stroke-width="1"/><rect x="577" y="334" width="1" height="14" fill="#43d28d"/><rect x="574" y="342" width="7" height="2" fill="#43d28d"/><rect x="587" y="341" width="1" height="9" fill="#43d28d"/><rect x="584.5" y="343.5" width="6" height="2" fill="#000" stroke="#43d28d" stroke-width="1"/><rect x="597" y="342" width="1" height="12" fill="#43d28d"/><rect x="594.5" y="342.5" width="6" height="8" fill="#3bc781" stroke="#43d28d" stroke-width="1"/><rect x="606" y="342" width="1" height="14" fill="#43d28d"/><rect x="603.5" y="344.5" width="6" height="6" fill="#000" stroke="#43d28d" stroke-width="1"/><rect x="616" y="321" width="1" height="26" fill="#43d28d"/><rect x="613.5" y="325.5" width="6" height="18" fill="#000" stroke="#43d28d" stroke-width="1"/><rect x="625" y="315" width="1" height="13" fill="#ff0000"/><rect x="622.5" y="315.5" width="6" height="10" fill="#000" stroke="#ff0000" stroke-width="1"/><rect x="635" y="314" width="1" height="7" fill="#ff0000"/><rect x="632.5" y="316.5" width="6" height="4" fill="#ff0000" stroke="#ff0000" stroke-width="1"/><rect x="645" y="317" width="1" height="9" fill="#ff0000"/><rect x="642.5" y="319.5" width="6" height="3" fill="#000" stroke="#ff0000" stroke-width="1"/><rect x="654" y="319" width="1" height="14" fill="#ff0000"/><rect x="651.5" y="319.5" width="6" height="5" fill="#ff0000" stroke="#ff0000" stroke-width="1"/><rect x="664" y="318" width="1" height="25" fill="#ff0000"/><rect x="661.5" y="327.5" width="6" height="9" fill="#ff0000" stroke="#ff0000" stroke-width="1"/><rect x="673" y="339" width="1" height="18" fill="#43d28d"/><rect x="670.5" y="340.5" width="6" height="16" fill="#3bc781" stroke="#43d28d" stroke-width="1"/><rect x="683" y="350" width="1" height="12" fill="#43d28d"/><rect x="680.5" y="354.5" width="6" height="2" fill="#000" stroke="#43d28d" stroke-width="1"/><rect x="692" y="349" width="1" height="16" fill="#43d28d"/><rect x="689.5" y="357.5" width="6" height="3" fill="#3bc781" stroke="#43d28d" stroke-width="1"/><rect x="702" y="353" width="1" height="14" fill="#43d28d"/><rect x="699.5" y="357.5" width="6" height="4" fill="#000" stroke="#43d28d" stroke-width="1"/><rect x="712" y="349" width="1" height="13" fill="#43d28d"/><rect x="709" y="360" width="7" height="1" fill="#43d28d"/><rect x="721" y="349" width="1" height="17" fill="#43d28d"/><rect x="718.5" y="357.5" width="6" height="6" fill="#000" stroke="#43d28d" stroke-width="1"/><rect x="731" y="352" width="1" height="18" fill="#43d28d"/><rect x="728.5" y="354.5" width="6" height="5" fill="#000" stroke="#43d28d" stroke-width="1"/><rect x="740" y="357" width="1" height="25" fill="#43d28d"/><rect x="737.5" y="357.5" width="6" height="24" fill="#3bc781" stroke="#43d28d" stroke-width="1"/><rect x="750" y="375" width="1" height="43" fill="#43d28d"/><rect x="747.5" y="377.5" width="6" height="9" fill="#000" stroke="#43d28d" stroke-width="1"/><rect x="760" y="375" width="1" height="13" fill="#43d28d"/><rect x="757" y="381" width="7" height="2" fill="#43d28d"/><rect x="769" y="385" width="1" height="45" fill="#43d28d"/><rect x="766.5" y="386.5" width="6" height="32" fill="#3bc781" stroke="#43d28d" stroke-width="1"/><rect x="779" y="406" width="1" height="30" fill="#43d28d"/><rect x="776.5" y="412.5" width="6" height="11" fill="#000" stroke="#43d28d" stroke-width="1"/><rect x="788" y="387" width="1" height="40" fill="#43d28d"/><rect x="785.5" y="389.5" width="6" height="16" fill="#000" stroke="#43d28d" stroke-width="1"/><rect x="798" y="347" width="1" height="42" fill="#ff0000"/><rect x="795.5" y="348.5" width="6" height="38" fill="#000" stroke="#ff0000" stroke-width="1"/><rect x="808" y="339" width="1" height="17" fill="#ff0000"/><rect x="805.5" y="346.5" width="6" height="5" fill="#000" stroke="#ff0000" stroke-width="1"/><rect x="817" y="339" width="1" height="20" fill="#ff0000"/><rect x="814.5" y="346.5" width="6" height="12" fill="#ff0000" stroke="#ff0000" stroke-width="1"/><rect x="827" y="360" width="1" height="25" fill="#ff0000"/><rect x="824.5" y="367.5" width="6" height="16" fill="#ff0000" stroke="#ff0000" stroke-width="1"/><rect x="836" y="382" width="1" height="26" fill="#ff0000"/><rect x="833.5" y="391.5" width="6" height="12" fill="#ff0000" stroke="#ff0000" stroke-width="1"/><rect x="846" y="396" width="1" height="25" fill="#43d28d"/><rect x="843" y="412" width="7" height="1" fill="#43d28d"/><rect x="855" y="402" width="1" height="60" fill="#43d28d"/><rect x="852.5" y="411.5" width="6" height="20" fill="#3bc781" stroke="#43d28d" stroke-width="1"/><rect x="865" y="427" width="1" height="50" fill="#43d28d"/><rect x="862.5" y="439.5" width="6" height="5" fill="#3bc781" stroke="#43d28d" stroke-width="1"/><rect x="875" y="397" width="1" height="65" fill="#43d28d"/><rect x="872.5" y="404.5" width="6" height="50" fill="#000" stroke="#43d28d" stroke-width="1"/><rect x="884" y="384" width="1" height="30" fill="#43d28d"/><rect x="881.5" y="384.5" width="6" height="18" fill="#000" stroke="#43d28d" stroke-width="1"/><rect x="894" y="366" width="1" height="20" fill="#ff0000"/><rect x="891.5" y="367.5" width="6" height="14" fill="#000" stroke="#ff0000" stroke-width="1"/><rect x="903" y="346" width="1" height="21" fill="#ff0000"/><rect x="900.5" y="346.5" width="6" height="10" fill="#000" stroke="#ff0000" stroke-width="1"/><rect x="913" y="338" width="1" height="20" fill="#ff0000"/><rect x="910.5" y="340.5" width="6" height="8" fill="#000" stroke="#ff0000" stroke-width="1"/><rect x="923" y="306" width="1" height="47" fill="#ff0000"/><rect x="920.5" y="326.5" width="6" height="21" fill="#000" stroke="#ff0000" stroke-width="1"/><rect x="932" y="309" width="1" height="21" fill="#ff0000"/><rect x="929.5" y="310.5" width="6" height="18" fill="#000" stroke="#ff0000" stroke-width="1"/><rect x="942" y="299" width="1" height="15" fill="#ff0000"/><rect x="939.5" y="301.5" width="6" height="3" fill="#000" stroke="#ff0000" stroke-width="1"/><rect x="951" y="298" width="1" height="21" fill="#ff0000"/><rect x="948.5" y="302.5" width="6" height="11" fill="#ff0000" stroke="#ff0000" stroke-width="1"/><rect x="961" y="296" width="1" height="27" fill="#ff0000"/><rect x="958.5" y="296.5" width="6" height="22" fill="#000" stroke="#ff0000" stroke-width="1"/><rect x="970" y="288" width="1" height="35" fill="#ff0000"/><rect x="967.5" y="295.5" width="6" height="27" fill="#ff0000" stroke="#ff0000" stroke-width="1"/><rect x="980" y="296" width="1" height="35" fill="#ff0000"/><rect x="977.5" y="296.5" width="6" height="33" fill="#000" stroke="#ff0000" stroke-width="1"/><rect x="990" y="288" width="1" height="14" fill="#ff0000"/><rect x="987.5" y="290.5" width="6" height="5" fill="#000" stroke="#ff0000" stroke-width="1"/><rect x="999" y="284" width="1" height="16" fill="#ff0000"/><rect x="996.5" y="284.5" width="6" height="5" fill="#000" stroke="#ff0000" stroke-width="1"/><rect x="1009" y="278" width="1" height="15" fill="#ff0000"/><rect x="1006.5" y="280.5" width="6" height="9" fill="#000" stroke="#ff0000" stroke-width="1"/><rect x="1018" y="274" width="1" height="13" fill="#ff0000"/><rect x="1015" y="283" width="7" height="1" fill="#ff0000"/><rect x="1028" y="273" width="1" height="19" fill="#ff0000"/><rect x="1025.5" y="284.5" width="6" height="5" fill="#ff0000" stroke="#ff0000" stroke-width="1"/><rect x="1038" y="279" width="1" height="17" fill="#ff0000"/><rect x="1035.5" y="281.5" width="6" height="8" fill="#000" stroke="#ff0000" stroke-width="1"/><rect x="1047" y="270" width="1" height="17" fill="#ff0000"/><rect x="1044.5" y="270.5" width="6" height="11" fill="#000" stroke="#ff0000" stroke-width="1"/><rect x="1057" y="267" width="1" height="15" fill="#ff0000"/><rect x="1054.5" y="270.5" width="6" height="5" fill="#ff0000" stroke="#ff0000" stroke-width="1"/><rect x="1066" y="273" width="1" height="15" fill="#ff0000"/><rect x="1063.5" y="278.5" width="6" height="3" fill="#ff0000" stroke="#ff0000" stroke-width="1"/><rect x="1076" y="274" width="1" height="19" fill="#ff0000"/><rect x="1073" y="283" width="7" height="2" fill="#ff0000"/><rect x="1086" y="276" width="1" height="17" fill="#ff0000"/><rect x="1083.5" y="277.5" width="6" height="10" fill="#000" stroke="#ff0000" stroke-width="1"/><rect x="1095" y="262" width="1" height="15" fill="#ff0000"/><rect x="1092.5" y="262.5" width="6" height="12" fill="#000" stroke="#ff0000" stroke-width="1"/><rect x="1105" y="260" width="1" height="13" fill="#ff0000"/><rect x="1102.5" y="266.5" width="6" height="6" fill="#ff0000" stroke="#ff0000" stroke-width="1"/><rect x="1114" y="264" width="1" height="13" fill="#ff0000"/><rect x="1111.5" y="265.5" width="6" height="8" fill="#000" stroke="#ff0000" stroke-width="1"/><rect x="1124" y="260" width="1" height="10" fill="#ff0000"/><rect x="1121.5" y="263.5" width="6" height="2" fill="#ff0000" stroke="#ff0000" stroke-width="1"/><rect x="1133" y="268" width="1" height="22" fill="#ff0000"/><rect x="1130.5" y="269.5" width="6" height="10" fill="#ff0000" stroke="#ff0000" stroke-width="1"/><rect x="1143" y="272" width="1" height="18" fill="#ff0000"/><rect x="1140.5" y="284.5" width="6" height="5" fill="#ff0000" stroke="#ff0000" stroke-width="1"/><rect x="1153" y="286" width="1" height="15" fill="#ff0000"/><rect x="1150" y="288" width="7" height="2" fill="#ff0000"/><rect x="1162" y="288" width="1" height="18" fill="#ffff00"/><rect x="1159.5" y="290.5" width="6" height="15" fill="#ffff00" stroke="#ffff00" stroke-width="1"/><rect x="1172" y="287" width="1" height="25" fill="#ffff00"/><rect x="1169.5" y="299.5" width="6" height="8" fill="#000" stroke="#ffff00" stroke-width="1"/><rect x="1181" y="283" width="1" height="17" fill="#ffff00"/><rect x="1178.5" y="283.5" width="6" height="15" fill="#000" stroke="#ffff00" stroke-width="1"/><rect x="1191" y="266" width="1" height="15" fill="#ffff00"/><rect x="1188.5" y="266.5" width="6" height="13" fill="#000" stroke="#ffff00" stroke-width="1"/><rect x="1201" y="262" width="1" height="10" fill="#ffff00"/><rect x="1198" y="267" width="7" height="1" fill="#ffff00"/><rect x="1210" y="265" width="1" height="11" fill="#ffff00"/><rect x="1207.5" y="267.5" width="6" height="2" fill="#ffff00" stroke="#ffff00" stroke-width="1"/><rect x="1220" y="266" width="1" height="15" fill="#ffff00"/><rect x="1217.5" y="276.5" width="6" height="4" fill="#ffff00" stroke="#ffff00" stroke-width="1"/><rect x="1229" y="278" width="1" height="10" fill="#ffff00"/><rect x="1226" y="280" width="7" height="2" fill="#ffff00"/><rect x="1239" y="279" width="1" height="17" fill="#ffff00"/><rect x="1236.5" y="281.5" width="6" height="8" fill="#ffff00" stroke="#ffff00" stroke-width="1"/><rect x="1248" y="279" width="1" height="20" fill="#ffff00"/><rect x="1245.5" y="288.5" width="6" height="7" fill="#000" stroke="#ffff00" stroke-width="1"/><rect x="1258" y="282" width="1" height="14" fill="#ffff00"/><rect x="1255.5" y="286.5" width="6" height="7" fill="#ffff00" stroke="#ffff00" stroke-width="1"/><rect x="1268" y="271" width="1" height="35" fill="#ffff00"/><rect x="1265.5" y="277.5" width="6" height="17" fill="#000" stroke="#ffff00" stroke-width="1"/><rect x="1277" y="278" width="1" height="22" fill="#ffff00"/><rect x="1274.5" y="282.5" width="6" height="17" fill="#ffff00" stroke="#ffff00" stroke-width="1"/><rect x="1287" y="270" width="1" height="33" fill="#ffff00"/><rect x="1284.5" y="270.5" width="6" height="28" fill="#000" stroke="#ffff00" stroke-width="1"/><rect x="1296" y="254" width="1" height="22" fill="#ffff00"/><rect x="1293.5" y="269.5" width="6" height="4" fill="#000" stroke="#ffff00" stroke-width="1"/><rect x="1306" y="265" width="1" height="13" fill="#ffff00"/><rect x="1303" y="272" width="7" height="2" fill="#ffff00"/><rect x="1316" y="266" width="1" height="17" fill="#ffff00"/><rect x="1313.5" y="275.5" width="6" height="6" fill="#ffff00" stroke="#ffff00" stroke-width="1"/><rect x="1325" y="282" width="1" height="13" fill="#ffff00"/><rect x="1322.5" y="285.5" width="6" height="6" fill="#ffff00" stroke="#ffff00" stroke-width="1"/><rect x="1335" y="281" width="1" height="14" fill="#ffff00"/><rect x="1332.5" y="283.5" width="6" height="5" fill="#000" stroke="#ffff00" stroke-width="1"/><rect x="1344" y="274" width="1" height="13" fill="#ffff00"/><rect x="1341.5" y="279.5" width="6" height="5" fill="#000" stroke="#ffff00" stroke-width="1"/><rect x="1354" y="259" width="1" height="19" fill="#ffff00"/><rect x="1351.5" y="261.5" width="6" height="15" fill="#000" stroke="#ffff00" stroke-width="1"/><rect x="1364" y="246" width="1" height="20" fill="#ff0000"/><rect x="1361.5" y="249.5" width="6" height="12" fill="#000" stroke="#ff0000" stroke-width="1"/><rect x="1373" y="244" width="1" height="9" fill="#ff0000"/><rect x="1370.5" y="250.5" width="6" height="2" fill="#ff0000" stroke="#ff0000" stroke-width="1"/><rect x="1383" y="235" width="1" height="8" fill="#ff0000"/><rect x="1380.5" y="237.5" width="6" height="2" fill="#000" stroke="#ff0000" stroke-width="1"/><rect x="1392" y="231" width="1" height="9" fill="#ff0000"/><rect x="1389.5" y="233.5" width="6" height="1" fill="#000" stroke="#ff0000" stroke-width="1"/><rect x="1402" y="234" width="1" height="9" fill="#ff0000"/><rect x="1399.5" y="235.5" width="6" height="6" fill="#ff0000" stroke="#ff0000" stroke-width="1"/><rect x="1411" y="227" width="1" height="16" fill="#ff0000"/><rect x="1408.5" y="229.5" width="6" height="12" fill="#000" stroke="#ff0000" stroke-width="1"/><rect x="1421" y="225" width="1" height="12" fill="#ff0000"/><rect x="1418" y="227" width="7" height="2" fill="#ff0000"/><rect x="1431" y="228" width="1" height="16" fill="#ff0000"/><rect x="1428.5" y="233.5" width="6" height="1" fill="#000" stroke="#ff0000" stroke-width="1"/><rect x="1440" y="229" width="1" height="8" fill="#ff0000"/><rect x="1437" y="233" width="7" height="1" fill="#ff0000"/><rect x="1450" y="235" width="1" height="12" fill="#ff0000"/><rect x="1447.5" y="236.5" width="6" height="9" fill="#ff0000" stroke="#ff0000" stroke-width="1"/><rect x="1459" y="237" width="1" height="11" fill="#ff0000"/><rect x="1456.5" y="242.5" width="6" height="2" fill="#ff0000" stroke="#ff0000" stroke-width="1"/><rect x="1469" y="229" width="1" height="19" fill="#ff0000"/><rect x="1466.5" y="229.5" width="6" height="14" fill="#000" stroke="#ff0000" stroke-width="1"/><rect x="1479" y="221" width="1" height="9" fill="#ff0000"/><rect x="1476.5" y="221.5" width="6" height="6" fill="#000" stroke="#ff0000" stroke-width="1"/><rect x="1488" y="224" width="1" height="8" fill="#ff0000"/><rect x="1485.5" y="224.5" width="6" height="3" fill="#ff0000" stroke="#ff0000" stroke-width="1"/><rect x="1498" y="223" width="1" height="8" fill="#ff0000"/><rect x="1495" y="228" width="7" height="1" fill="#ff0000"/><rect x="1507" y="231" width="1" height="18" fill="#ff0000"/><rect x="1504.5" y="231.5" width="6" height="15" fill="#ff0000" stroke="#ff0000" stroke-width="1"/><rect x="1517" y="241" width="1" height="13" fill="#ff0000"/><rect x="1514" y="249" width="7" height="1" fill="#ff0000"/><g shape-rendering="auto" fill="none" stroke-width="2.2" stroke-linejoin="round" stroke-linecap="butt"><polyline points="89.5,235.6 98.5,235.6 108.5,241.0 117.5,242.2 127.5,244.8 136.5,261.9 146.5,276.6 156.5,294.9 165.5,295.5 175.5,295.5 184.5,295.5" stroke="#00f000"/><polyline points="194.5,339.6 204.5,333.3 213.5,333.3 223.5,327.5 232.5,326.5 242.5,325.8 251.5,311.4 261.5,307.7 271.5,307.7 280.5,305.5 290.5,305.5 299.5,305.5 309.5,302.7 319.5,293.3 328.5,293.3 338.5,293.3 347.5,293.3 357.5,289.1 367.5,289.1 376.5,289.1 386.5,289.1 395.5,289.1 405.5,289.1" stroke="#ff0000"/><polyline points="414.5,265.7 424.5,268.6 434.5,268.6 443.5,268.6 453.5,280.1 462.5,291.4 472.5,295.5 482.5,295.5 491.5,295.5 501.5,295.5 510.5,295.5 520.5,295.5 529.5,295.5 539.5,299.9 549.5,306.1 558.5,309.5 568.5,315.8 577.5,315.8 587.5,315.8 597.5,318.9 606.5,319.8 616.5,319.8" stroke="#00f000"/><polyline points="625.5,352.6 635.5,347.4 645.5,347.4 654.5,347.4 664.5,347.4" stroke="#ff0000"/><polyline points="673.5,318.2 683.5,325.7 692.5,325.7 702.5,328.8 712.5,328.8 721.5,329.1 731.5,329.8 740.5,333.6 750.5,354.5 760.5,354.5 769.5,363.3 779.5,371.8 788.5,371.8" stroke="#00f000"/><polyline points="798.5,428.3 808.5,408.5 817.5,408.5 827.5,408.5 836.5,408.5" stroke="#ff0000"/><polyline points="846.5,350.8 855.5,365.0 865.5,384.0 875.5,384.0 884.5,384.0" stroke="#00f000"/><polyline points="894.5,445.2 903.5,427.3 913.5,418.6 923.5,403.2 932.5,392.8 942.5,377.8 951.5,372.8 961.5,367.8 970.5,358.4 980.5,358.4 990.5,347.1 999.5,343.3 1009.5,336.2 1018.5,323.9 1028.5,323.9 1038.5,323.9 1047.5,321.8 1057.5,313.9 1066.5,313.9 1076.5,313.9 1086.5,313.9 1095.5,302.1 1105.5,299.2 1114.5,299.2 1124.5,294.8 1133.5,294.8 1143.5,294.8 1153.5,294.8" stroke="#ff0000"/><polyline points="1162.5,264.4 1354.5,264.4" stroke="#00f000"/><polyline points="1364.5,294.6 1373.5,283.0 1383.5,271.0 1392.5,264.5 1402.5,264.5 1411.5,263.6 1421.5,260.5 1431.5,260.5 1440.5,260.5 1450.5,260.5 1459.5,260.5 1469.5,260.5 1479.5,248.8 1488.5,248.8 1498.5,248.8 1507.5,248.8 1517.5,248.8" stroke="#ff0000"/></g><g shape-rendering="auto"><text x="798" y="482" font-size="12" fill="#f2f2f2">2635.09</text><path d="M845 477.5H865M859 473.5L865.5 477.5L859 481.5" stroke="#f2f2f2" stroke-width="1" fill="none"/><text x="1412.5" y="219.8" font-size="12" fill="#f2f2f2">3174.26</text><path d="M1459 215L1479.5 220.6M1472 214.2L1479.5 220.6L1470 222.4" stroke="#f2f2f2" stroke-width="1" fill="none"/></g></svg>
<svg style="left:0;top:0" width="1920" height="1030" shape-rendering="crispEdges"><defs><linearGradient id="bg1" x1="0" y1="0" x2="1" y2="0"><stop offset="0" stop-color="#ff0000"/><stop offset="0.5" stop-color="#ffffff"/><stop offset="1" stop-color="#ff0000"/></linearGradient></defs><path d="M86.5 538V642" stroke="#151515" stroke-width="1"/><path d="M220.5 538V642" stroke="#151515" stroke-width="1"/><path d="M431.5 538V642" stroke="#151515" stroke-width="1"/><path d="M632.5 538V642" stroke="#151515" stroke-width="1"/><path d="M843.5 538V642" stroke="#151515" stroke-width="1"/><path d="M987.5 538V642" stroke="#151515" stroke-width="1"/><path d="M1188.5 538V642" stroke="#151515" stroke-width="1"/><path d="M1380.5 538V642" stroke="#151515" stroke-width="1"/><path d="M82 557.5H1529" stroke="#151515" stroke-width="1"/><path d="M82 594.5H1529" stroke="#151515" stroke-width="1"/><g shape-rendering="auto"><text x="81" y="562.2" font-size="12" fill="#f2f2f2" text-anchor="end">200.80</text><text x="1529.5" y="562.2" font-size="12" fill="#f2f2f2">200.80</text><text x="81" y="599.1" font-size="12" fill="#f2f2f2" text-anchor="end">100.40</text><text x="1529.5" y="599.1" font-size="12" fill="#f2f2f2">100.40</text></g><rect x="86" y="627" width="7" height="4" fill="url(#bg1)"/><rect x="95" y="626" width="7" height="5" fill="url(#bg1)"/><rect x="105" y="624" width="7" height="7" fill="url(#bg1)"/><rect x="114" y="625" width="7" height="6" fill="url(#bg1)"/><rect x="124" y="625" width="7" height="6" fill="url(#bg1)"/><rect x="133" y="628" width="7" height="3" fill="url(#bg1)"/><rect x="143" y="629" width="7" height="2" fill="url(#bg1)"/><rect x="153" y="628" width="7" height="3" fill="url(#bg1)"/><rect x="162" y="624" width="7" height="7" fill="url(#bg1)"/><rect x="172" y="618" width="7" height="13" fill="url(#bg1)"/><rect x="181" y="617" width="7" height="14" fill="url(#bg1)"/><rect x="191" y="622" width="7" height="9" fill="url(#bg1)"/><rect x="201" y="619" width="7" height="12" fill="url(#bg1)"/><rect x="210" y="625" width="7" height="6" fill="url(#bg1)"/><rect x="220" y="628" width="7" height="3" fill="url(#bg1)"/><rect x="229" y="628" width="7" height="3" fill="url(#bg1)"/><rect x="239" y="629" width="7" height="2" fill="url(#bg1)"/><rect x="248" y="623" width="7" height="8" fill="url(#bg1)"/><rect x="258" y="617" width="7" height="14" fill="url(#bg1)"/><rect x="268" y="622" width="7" height="9" fill="url(#bg1)"/><rect x="277" y="627" width="7" height="4" fill="url(#bg1)"/><rect x="287" y="630" width="7" height="1" fill="#e00000"/><rect x="296" y="629" width="7" height="2" fill="url(#bg1)"/><rect x="306" y="621" width="7" height="10" fill="url(#bg1)"/><rect x="316" y="617" width="7" height="14" fill="url(#bg1)"/><rect x="325" y="620" width="7" height="11" fill="url(#bg1)"/><rect x="335" y="620" width="7" height="11" fill="url(#bg1)"/><rect x="344" y="620" width="7" height="11" fill="url(#bg1)"/><rect x="354" y="623" width="7" height="8" fill="url(#bg1)"/><rect x="364" y="621" width="7" height="10" fill="url(#bg1)"/><rect x="373" y="624" width="7" height="7" fill="url(#bg1)"/><rect x="383" y="626" width="7" height="5" fill="url(#bg1)"/><rect x="392" y="627" width="7" height="4" fill="url(#bg1)"/><rect x="402" y="625" width="7" height="6" fill="url(#bg1)"/><rect x="411" y="627" width="7" height="4" fill="url(#bg1)"/><rect x="421" y="629" width="7" height="2" fill="url(#bg1)"/><rect x="431" y="627" width="7" height="4" fill="url(#bg1)"/><rect x="440" y="617" width="7" height="14" fill="url(#bg1)"/><rect x="450" y="625" width="7" height="6" fill="url(#bg1)"/><rect x="459" y="628" width="7" height="3" fill="url(#bg1)"/><rect x="469" y="628" width="7" height="3" fill="url(#bg1)"/><rect x="479" y="623" width="7" height="8" fill="url(#bg1)"/><rect x="488" y="628" width="7" height="3" fill="url(#bg1)"/><rect x="498" y="627" width="7" height="4" fill="url(#bg1)"/><rect x="507" y="626" width="7" height="5" fill="url(#bg1)"/><rect x="517" y="627" width="7" height="4" fill="url(#bg1)"/><rect x="526" y="624" width="7" height="7" fill="url(#bg1)"/><rect x="536" y="626" width="7" height="5" fill="url(#bg1)"/><rect x="546" y="629" width="7" height="2" fill="url(#bg1)"/><rect x="555" y="629" width="7" height="2" fill="url(#bg1)"/><rect x="565" y="629" width="7" height="2" fill="url(#bg1)"/><rect x="574" y="630" width="7" height="1" fill="#e00000"/><rect x="584" y="630" width="7" height="1" fill="#e00000"/><rect x="594" y="629" width="7" height="2" fill="url(#bg1)"/><rect x="603" y="629" width="7" height="2" fill="url(#bg1)"/><rect x="613" y="628" width="7" height="3" fill="url(#bg1)"/><rect x="622" y="622" width="7" height="9" fill="url(#bg1)"/><rect x="632" y="627" width="7" height="4" fill="url(#bg1)"/><rect x="642" y="627" width="7" height="4" fill="url(#bg1)"/><rect x="651" y="628" width="7" height="3" fill="url(#bg1)"/><rect x="661" y="629" width="7" height="2" fill="url(#bg1)"/><rect x="670" y="630" width="7" height="1" fill="#e00000"/><rect x="680" y="627" width="7" height="4" fill="url(#bg1)"/><rect x="689" y="628" width="7" height="3" fill="url(#bg1)"/><rect x="699" y="625" width="7" height="6" fill="url(#bg1)"/><rect x="709" y="627" width="7" height="4" fill="url(#bg1)"/><rect x="718" y="629" width="7" height="2" fill="url(#bg1)"/><rect x="728" y="629" width="7" height="2" fill="url(#bg1)"/><rect x="737" y="629" width="7" height="2" fill="url(#bg1)"/><rect x="747" y="628" width="7" height="3" fill="url(#bg1)"/><rect x="757" y="629" width="7" height="2" fill="url(#bg1)"/><rect x="766" y="629" width="7" height="2" fill="url(#bg1)"/><rect x="776" y="630" width="7" height="1" fill="#e00000"/><rect x="785" y="624" width="7" height="7" fill="url(#bg1)"/><rect x="795" y="614" width="7" height="17" fill="url(#bg1)"/><rect x="805" y="615" width="7" height="16" fill="url(#bg1)"/><rect x="814" y="627" width="7" height="4" fill="url(#bg1)"/><rect x="824" y="629" width="7" height="2" fill="url(#bg1)"/><rect x="833" y="630" width="7" height="1" fill="#e00000"/><rect x="843" y="630" width="7" height="1" fill="#e00000"/><rect x="852" y="630" width="7" height="1" fill="#e00000"/><rect x="862" y="630" width="7" height="1" fill="#e00000"/><rect x="872" y="626" width="7" height="5" fill="url(#bg1)"/><rect x="881" y="593" width="7" height="38" fill="url(#bg1)"/><rect x="891" y="588" width="7" height="43" fill="url(#bg1)"/><rect x="900" y="556" width="7" height="75" fill="url(#bg1)"/><rect x="910" y="583" width="7" height="48" fill="url(#bg1)"/><rect x="920" y="591" width="7" height="40" fill="url(#bg1)"/><rect x="929" y="601" width="7" height="30" fill="url(#bg1)"/><rect x="939" y="598" width="7" height="33" fill="url(#bg1)"/><rect x="948" y="592" width="7" height="39" fill="url(#bg1)"/><rect x="958" y="598" width="7" height="33" fill="url(#bg1)"/><rect x="967" y="623" width="7" height="8" fill="url(#bg1)"/><rect x="977" y="623" width="7" height="8" fill="url(#bg1)"/><rect x="987" y="604" width="7" height="27" fill="url(#bg1)"/><rect x="996" y="611" width="7" height="20" fill="url(#bg1)"/><rect x="1006" y="618" width="7" height="13" fill="url(#bg1)"/><rect x="1015" y="619" width="7" height="12" fill="url(#bg1)"/><rect x="1025" y="618" width="7" height="13" fill="url(#bg1)"/><rect x="1035" y="621" width="7" height="10" fill="url(#bg1)"/><rect x="1044" y="615" width="7" height="16" fill="url(#bg1)"/><rect x="1054" y="616" width="7" height="15" fill="url(#bg1)"/><rect x="1063" y="620" width="7" height="11" fill="url(#bg1)"/><rect x="1073" y="629" width="7" height="2" fill="url(#bg1)"/><rect x="1083" y="628" width="7" height="3" fill="url(#bg1)"/><rect x="1092" y="616" width="7" height="15" fill="url(#bg1)"/><rect x="1102" y="622" width="7" height="9" fill="url(#bg1)"/><rect x="1111" y="620" width="7" height="11" fill="url(#bg1)"/><rect x="1121" y="617" width="7" height="14" fill="url(#bg1)"/><rect x="1130" y="615" width="7" height="16" fill="url(#bg1)"/><rect x="1140" y="627" width="7" height="4" fill="url(#bg1)"/><rect x="1150" y="628" width="7" height="3" fill="url(#bg1)"/><rect x="1159" y="625" width="7" height="6" fill="url(#bg1)"/><rect x="1169" y="622" width="7" height="9" fill="url(#bg1)"/><rect x="1178" y="620" width="7" height="11" fill="url(#bg1)"/><rect x="1188" y="624" width="7" height="7" fill="url(#bg1)"/><rect x="1198" y="625" width="7" height="6" fill="url(#bg1)"/><rect x="1207" y="628" width="7" height="3" fill="url(#bg1)"/><rect x="1217" y="628" width="7" height="3" fill="url(#bg1)"/><rect x="1226" y="627" width="7" height="4" fill="url(#bg1)"/><rect x="1236" y="629" width="7" height="2" fill="url(#bg1)"/><rect x="1245" y="629" width="7" height="2" fill="url(#bg1)"/><rect x="1255" y="627" width="7" height="4" fill="url(#bg1)"/><rect x="1265" y="630" width="7" height="1" fill="#e00000"/><rect x="1274" y="629" width="7" height="2" fill="url(#bg1)"/><rect x="1284" y="627" width="7" height="4" fill="url(#bg1)"/><rect x="1293" y="607" width="7" height="24" fill="url(#bg1)"/><rect x="1303" y="625" width="7" height="6" fill="url(#bg1)"/><rect x="1313" y="627" width="7" height="4" fill="url(#bg1)"/><rect x="1322" y="628" width="7" height="3" fill="url(#bg1)"/><rect x="1332" y="626" width="7" height="5" fill="url(#bg1)"/><rect x="1341" y="628" width="7" height="3" fill="url(#bg1)"/><rect x="1351" y="627" width="7" height="4" fill="url(#bg1)"/><rect x="1361" y="620" width="7" height="11" fill="url(#bg1)"/><rect x="1370" y="621" width="7" height="10" fill="url(#bg1)"/><rect x="1389" y="628" width="7" height="3" fill="url(#bg1)"/><rect x="1399" y="629" width="7" height="2" fill="url(#bg1)"/><rect x="1408" y="625" width="7" height="6" fill="url(#bg1)"/><rect x="1418" y="628" width="7" height="3" fill="url(#bg1)"/><rect x="1428" y="628" width="7" height="3" fill="url(#bg1)"/><rect x="1437" y="628" width="7" height="3" fill="url(#bg1)"/><rect x="1447" y="630" width="7" height="1" fill="#e00000"/><rect x="1456" y="629" width="7" height="2" fill="url(#bg1)"/><rect x="1466" y="626" width="7" height="5" fill="url(#bg1)"/><rect x="1476" y="628" width="7" height="3" fill="url(#bg1)"/><rect x="1485" y="630" width="7" height="1" fill="#e00000"/><rect x="1495" y="629" width="7" height="2" fill="url(#bg1)"/><rect x="1504" y="629" width="7" height="2" fill="url(#bg1)"/><rect x="1514" y="629" width="7" height="2" fill="url(#bg1)"/></svg>
<svg style="left:0;top:0" width="1920" height="1030"><g shape-rendering="crispEdges"><path d="M86.5 665V769" stroke="#151515" stroke-width="1"/><path d="M220.5 665V769" stroke="#151515" stroke-width="1"/><path d="M431.5 665V769" stroke="#151515" stroke-width="1"/><path d="M632.5 665V769" stroke="#151515" stroke-width="1"/><path d="M843.5 665V769" stroke="#151515" stroke-width="1"/><path d="M987.5 665V769" stroke="#151515" stroke-width="1"/><path d="M1188.5 665V769" stroke="#151515" stroke-width="1"/><path d="M1380.5 665V769" stroke="#151515" stroke-width="1"/><path d="M82 684.5H1529" stroke="#151515" stroke-width="1"/><path d="M82 721.5H1529" stroke="#151515" stroke-width="1"/></g><text x="81" y="688.9" font-size="12" fill="#f2f2f2" text-anchor="end">14.00</text><text x="1529.5" y="688.9" font-size="12" fill="#f2f2f2">14.00</text><text x="81" y="725.6" font-size="12" fill="#f2f2f2" text-anchor="end">8.40</text><text x="1529.5" y="725.6" font-size="12" fill="#f2f2f2">8.40</text><path d="M98.5 737.0V769M108.5 730.4V769M117.5 723.9V769M127.5 717.3V769M136.5 710.8V769M146.5 704.2V769M156.5 697.6V769M165.5 691.1V769M175.5 684.5V769M184.5 717.3V769M194.5 737.0V769M204.5 730.4V769M213.5 743.6V769M223.5 737.0V769M232.5 730.4V769M242.5 723.9V769M251.5 717.3V769M261.5 710.8V769M271.5 737.0V769M280.5 737.0V769M290.5 730.4V769M299.5 743.6V769M309.5 737.0V769M319.5 730.4V769M328.5 743.6V769M338.5 737.0V769M347.5 730.4V769M357.5 723.9V769M367.5 717.3V769M376.5 737.0V769M386.5 750.1V769M395.5 743.6V769M405.5 750.1V769M414.5 743.6V769M424.5 737.0V769M434.5 730.4V769M443.5 723.9V769M453.5 717.3V769M462.5 730.4V769M472.5 737.0V769M482.5 756.7V769M491.5 750.1V769M501.5 743.6V769M510.5 737.0V769M520.5 737.0V769M529.5 743.6V769M539.5 756.7V769M549.5 750.1V769M558.5 750.1V769M568.5 743.6V769M577.5 750.1V769M587.5 750.1V769M597.5 743.6V769M606.5 737.0V769M616.5 730.4V769M625.5 723.9V769M635.5 717.3V769M645.5 743.6V769M654.5 750.1V769M664.5 750.1V769M673.5 743.6V769M683.5 737.0V769M692.5 730.4V769M702.5 750.1V769M712.5 750.1V769M721.5 743.6V769M731.5 737.0V769M740.5 730.4V769M750.5 723.9V769M760.5 717.3V769M769.5 710.8V769M779.5 704.2V769M788.5 756.7V769M798.5 750.1V769M808.5 743.6V769M817.5 743.6V769M827.5 737.0V769M836.5 730.4V769M846.5 723.9V769M855.5 750.1V769M865.5 750.1V769M875.5 743.6V769M884.5 743.6V769M894.5 737.0V769M903.5 730.4V769M913.5 723.9V769M923.5 717.3V769M932.5 710.8V769M942.5 704.2V769M951.5 697.6V769M961.5 691.1V769M970.5 737.0V769M980.5 743.6V769M990.5 737.0V769M999.5 743.6V769M1009.5 737.0V769M1018.5 730.4V769M1028.5 756.7V769M1038.5 750.1V769M1047.5 743.6V769M1057.5 737.0V769M1066.5 730.4V769M1076.5 723.9V769M1086.5 717.3V769M1095.5 710.8V769M1105.5 704.2V769M1114.5 697.6V769M1124.5 691.1V769M1133.5 737.0V769M1143.5 730.4V769M1153.5 743.6V769M1162.5 737.0V769M1172.5 730.4V769M1181.5 730.4V769M1191.5 723.9V769M1201.5 717.3V769M1210.5 730.4V769M1220.5 743.6V769M1229.5 737.0V769M1239.5 730.4V769M1248.5 723.9V769M1258.5 717.3V769M1268.5 750.1V769M1277.5 756.7V769M1287.5 750.1V769M1296.5 743.6V769M1306.5 737.0V769M1316.5 750.1V769M1325.5 743.6V769M1335.5 737.0V769M1344.5 730.4V769M1354.5 756.7V769M1364.5 750.1V769M1373.5 750.1V769M1383.5 743.6V769M1392.5 743.6V769M1402.5 737.0V769M1411.5 730.4V769M1421.5 743.6V769M1431.5 756.7V769M1440.5 750.1V769M1450.5 750.1V769M1459.5 743.6V769M1469.5 737.0V769M1479.5 743.6V769M1488.5 756.7V769M1498.5 750.1V769M1507.5 750.1V769M1517.5 743.6V769" stroke="#ff00ff" stroke-width="1.8" fill="none"/><polyline points="89.5,743.6 98.5,737.0 108.5,730.4 117.5,723.9 127.5,717.3 136.5,710.8 146.5,704.2 156.5,697.6 165.5,691.1 175.5,684.5 184.5,717.3 194.5,737.0 204.5,730.4 213.5,743.6 223.5,737.0 232.5,730.4 242.5,723.9 251.5,717.3 261.5,710.8 271.5,737.0 280.5,737.0 290.5,730.4 299.5,743.6 309.5,737.0 319.5,730.4 328.5,743.6 338.5,737.0 347.5,730.4 357.5,723.9 367.5,717.3 376.5,737.0 386.5,750.1 395.5,743.6 405.5,750.1 414.5,743.6 424.5,737.0 434.5,730.4 443.5,723.9 453.5,717.3 462.5,730.4 472.5,737.0 482.5,756.7 491.5,750.1 501.5,743.6 510.5,737.0 520.5,737.0 529.5,743.6 539.5,756.7 549.5,750.1 558.5,750.1 568.5,743.6 577.5,750.1 587.5,750.1 597.5,743.6 606.5,737.0 616.5,730.4 625.5,723.9 635.5,717.3 645.5,743.6 654.5,750.1 664.5,750.1 673.5,743.6 683.5,737.0 692.5,730.4 702.5,750.1 712.5,750.1 721.5,743.6 731.5,737.0 740.5,730.4 750.5,723.9 760.5,717.3 769.5,710.8 779.5,704.2 788.5,756.7 798.5,750.1 808.5,743.6 817.5,743.6 827.5,737.0 836.5,730.4 846.5,723.9 855.5,750.1 865.5,750.1 875.5,743.6 884.5,743.6 894.5,737.0 903.5,730.4 913.5,723.9 923.5,717.3 932.5,710.8 942.5,704.2 951.5,697.6 961.5,691.1 970.5,737.0 980.5,743.6 990.5,737.0 999.5,743.6 1009.5,737.0 1018.5,730.4 1028.5,756.7 1038.5,750.1 1047.5,743.6 1057.5,737.0 1066.5,730.4 1076.5,723.9 1086.5,717.3 1095.5,710.8 1105.5,704.2 1114.5,697.6 1124.5,691.1 1133.5,737.0 1143.5,730.4 1153.5,743.6 1162.5,737.0 1172.5,730.4 1181.5,730.4 1191.5,723.9 1201.5,717.3 1210.5,730.4 1220.5,743.6 1229.5,737.0 1239.5,730.4 1248.5,723.9 1258.5,717.3 1268.5,750.1 1277.5,756.7 1287.5,750.1 1296.5,743.6 1306.5,737.0 1316.5,750.1 1325.5,743.6 1335.5,737.0 1344.5,730.4 1354.5,756.7 1364.5,750.1 1373.5,750.1 1383.5,743.6 1392.5,743.6 1402.5,737.0 1411.5,730.4 1421.5,743.6 1431.5,756.7 1440.5,750.1 1450.5,750.1 1459.5,743.6 1469.5,737.0 1479.5,743.6 1488.5,756.7 1498.5,750.1 1507.5,750.1 1517.5,743.6" stroke="#ff00ff" stroke-width="2" fill="none" stroke-linejoin="miter"/></svg>
<svg style="left:0;top:0" width="1920" height="1030"><g shape-rendering="crispEdges"><path d="M86.5 792V897" stroke="#151515" stroke-width="1"/><path d="M220.5 792V897" stroke="#151515" stroke-width="1"/><path d="M431.5 792V897" stroke="#151515" stroke-width="1"/><path d="M632.5 792V897" stroke="#151515" stroke-width="1"/><path d="M843.5 792V897" stroke="#151515" stroke-width="1"/><path d="M987.5 792V897" stroke="#151515" stroke-width="1"/><path d="M1188.5 792V897" stroke="#151515" stroke-width="1"/><path d="M1380.5 792V897" stroke="#151515" stroke-width="1"/><path d="M82 811.5H1529" stroke="#151515" stroke-width="1"/><path d="M82 849.5H1529" stroke="#151515" stroke-width="1"/><rect x="86" y="838" width="7" height="2" fill="#ff0000"/><rect x="95" y="832" width="7" height="8" fill="#ff0000"/><rect x="105" y="834" width="7" height="6" fill="#ff0000"/><rect x="114" y="840" width="7" height="6" fill="#00ff00"/><rect x="124" y="840" width="7" height="1" fill="#00ff00"/><rect x="133" y="840" width="7" height="11" fill="#00ff00"/><rect x="143" y="840" width="7" height="4" fill="#00ff00"/><rect x="153" y="840" width="7" height="4" fill="#00ff00"/><rect x="162" y="828" width="7" height="12" fill="#ff0000"/><rect x="172" y="830" width="7" height="10" fill="#ff0000"/><rect x="181" y="836" width="7" height="4" fill="#ff0000"/><rect x="191" y="838" width="7" height="2" fill="#ff0000"/><rect x="201" y="834" width="7" height="6" fill="#ff0000"/><rect x="210" y="840" width="7" height="2" fill="#00ff00"/><rect x="220" y="839" width="7" height="1" fill="#ff0000"/><rect x="229" y="840" width="7" height="2" fill="#00ff00"/><rect x="239" y="840" width="7" height="2" fill="#00ff00"/><rect x="248" y="824" width="7" height="16" fill="#ff0000"/><rect x="258" y="830" width="7" height="10" fill="#ff0000"/><rect x="268" y="832" width="7" height="8" fill="#ff0000"/><rect x="277" y="840" width="7" height="16" fill="#00ff00"/><rect x="287" y="840" width="7" height="6" fill="#00ff00"/><rect x="296" y="832" width="7" height="8" fill="#ff0000"/><rect x="306" y="832" width="7" height="8" fill="#ff0000"/><rect x="316" y="830" width="7" height="10" fill="#ff0000"/><rect x="325" y="840" width="7" height="6" fill="#00ff00"/><rect x="335" y="832" width="7" height="8" fill="#ff0000"/><rect x="344" y="828" width="7" height="12" fill="#ff0000"/><rect x="354" y="840" width="7" height="4" fill="#00ff00"/><rect x="364" y="834" width="7" height="6" fill="#ff0000"/><rect x="373" y="840" width="7" height="10" fill="#00ff00"/><rect x="383" y="840" width="7" height="2" fill="#00ff00"/><rect x="392" y="840" width="7" height="12" fill="#00ff00"/><rect x="402" y="838" width="7" height="2" fill="#ff0000"/><rect x="411" y="840" width="7" height="2" fill="#00ff00"/><rect x="421" y="840" width="7" height="2" fill="#00ff00"/><rect x="431" y="839" width="7" height="1" fill="#ff0000"/><rect x="440" y="832" width="7" height="8" fill="#ff0000"/><rect x="450" y="840" width="7" height="2" fill="#00ff00"/><rect x="459" y="840" width="7" height="2" fill="#00ff00"/><rect x="469" y="839" width="7" height="1" fill="#ff0000"/><rect x="479" y="840" width="7" height="6" fill="#00ff00"/><rect x="488" y="834" width="7" height="6" fill="#ff0000"/><rect x="498" y="836" width="7" height="4" fill="#ff0000"/><rect x="507" y="838" width="7" height="2" fill="#ff0000"/><rect x="517" y="839" width="7" height="1" fill="#ff0000"/><rect x="526" y="839" width="7" height="1" fill="#ff0000"/><rect x="536" y="840" width="7" height="8" fill="#00ff00"/><rect x="546" y="840" width="7" height="4" fill="#00ff00"/><rect x="555" y="834" width="7" height="6" fill="#ff0000"/><rect x="565" y="838" width="7" height="2" fill="#ff0000"/><rect x="574" y="840" width="7" height="8" fill="#00ff00"/><rect x="584" y="834" width="7" height="6" fill="#ff0000"/><rect x="594" y="836" width="7" height="4" fill="#ff0000"/><rect x="603" y="840" width="7" height="8" fill="#00ff00"/><rect x="613" y="836" width="7" height="4" fill="#ff0000"/><rect x="622" y="832" width="7" height="8" fill="#ff0000"/><rect x="632" y="839" width="7" height="1" fill="#ff0000"/><rect x="642" y="840" width="7" height="1" fill="#00ff00"/><rect x="651" y="839" width="7" height="1" fill="#ff0000"/><rect x="661" y="840" width="7" height="7" fill="#00ff00"/><rect x="670" y="839" width="7" height="1" fill="#ff0000"/><rect x="680" y="840" width="7" height="1" fill="#00ff00"/><rect x="689" y="840" width="7" height="3" fill="#00ff00"/><rect x="699" y="836" width="7" height="4" fill="#ff0000"/><rect x="709" y="840" width="7" height="6" fill="#00ff00"/><rect x="718" y="838" width="7" height="2" fill="#ff0000"/><rect x="728" y="838" width="7" height="2" fill="#ff0000"/><rect x="737" y="840" width="7" height="7" fill="#00ff00"/><rect x="747" y="834" width="7" height="6" fill="#ff0000"/><rect x="757" y="840" width="7" height="9" fill="#00ff00"/><rect x="766" y="840" width="7" height="17" fill="#00ff00"/><rect x="776" y="816" width="7" height="24" fill="#ff0000"/><rect x="785" y="828" width="7" height="12" fill="#ff0000"/><rect x="795" y="814" width="7" height="26" fill="#ff0000"/><rect x="805" y="838" width="7" height="2" fill="#ff0000"/><rect x="814" y="840" width="7" height="19" fill="#00ff00"/><rect x="824" y="840" width="7" height="29" fill="#00ff00"/><rect x="833" y="840" width="7" height="15" fill="#00ff00"/><rect x="843" y="840" width="7" height="16" fill="#00ff00"/><rect x="852" y="840" width="7" height="9" fill="#00ff00"/><rect x="862" y="840" width="7" height="33" fill="#00ff00"/><rect x="872" y="818" width="7" height="22" fill="#ff0000"/><rect x="881" y="822" width="7" height="18" fill="#ff0000"/><rect x="891" y="824" width="7" height="16" fill="#ff0000"/><rect x="900" y="814" width="7" height="26" fill="#ff0000"/><rect x="910" y="826" width="7" height="14" fill="#ff0000"/><rect x="920" y="830" width="7" height="10" fill="#ff0000"/><rect x="929" y="822" width="7" height="18" fill="#ff0000"/><rect x="939" y="812" width="7" height="28" fill="#ff0000"/><rect x="948" y="826" width="7" height="14" fill="#ff0000"/><rect x="958" y="826" width="7" height="14" fill="#ff0000"/><rect x="967" y="840" width="7" height="46" fill="#00ff00"/><rect x="977" y="816" width="7" height="24" fill="#ff0000"/><rect x="987" y="828" width="7" height="12" fill="#ff0000"/><rect x="996" y="832" width="7" height="8" fill="#ff0000"/><rect x="1006" y="840" width="7" height="8" fill="#00ff00"/><rect x="1015" y="836" width="7" height="4" fill="#ff0000"/><rect x="1025" y="840" width="7" height="5" fill="#00ff00"/><rect x="1035" y="840" width="7" height="2" fill="#00ff00"/><rect x="1044" y="828" width="7" height="12" fill="#ff0000"/><rect x="1054" y="834" width="7" height="6" fill="#ff0000"/><rect x="1063" y="840" width="7" height="1" fill="#00ff00"/><rect x="1073" y="840" width="7" height="5" fill="#00ff00"/><rect x="1083" y="826" width="7" height="14" fill="#ff0000"/><rect x="1092" y="826" width="7" height="14" fill="#ff0000"/><rect x="1102" y="840" width="7" height="2" fill="#00ff00"/><rect x="1111" y="822" width="7" height="18" fill="#ff0000"/><rect x="1121" y="834" width="7" height="6" fill="#ff0000"/><rect x="1130" y="840" width="7" height="3" fill="#00ff00"/><rect x="1140" y="840" width="7" height="19" fill="#00ff00"/><rect x="1150" y="834" width="7" height="6" fill="#ff0000"/><rect x="1159" y="840" width="7" height="22" fill="#00ff00"/><rect x="1169" y="828" width="7" height="12" fill="#ff0000"/><rect x="1178" y="832" width="7" height="8" fill="#ff0000"/><rect x="1188" y="830" width="7" height="10" fill="#ff0000"/><rect x="1198" y="839" width="7" height="1" fill="#ff0000"/><rect x="1207" y="840" width="7" height="4" fill="#00ff00"/><rect x="1217" y="840" width="7" height="12" fill="#00ff00"/><rect x="1226" y="840" width="7" height="5" fill="#00ff00"/><rect x="1236" y="840" width="7" height="11" fill="#00ff00"/><rect x="1245" y="840" width="7" height="7" fill="#00ff00"/><rect x="1255" y="840" width="7" height="1" fill="#00ff00"/><rect x="1265" y="840" width="7" height="22" fill="#00ff00"/><rect x="1274" y="840" width="7" height="11" fill="#00ff00"/><rect x="1284" y="808" width="7" height="32" fill="#ff0000"/><rect x="1293" y="840" width="7" height="1" fill="#00ff00"/><rect x="1303" y="838" width="7" height="2" fill="#ff0000"/><rect x="1313" y="840" width="7" height="14" fill="#00ff00"/><rect x="1322" y="840" width="7" height="1" fill="#00ff00"/><rect x="1332" y="828" width="7" height="12" fill="#ff0000"/><rect x="1341" y="839" width="7" height="1" fill="#ff0000"/><rect x="1351" y="839" width="7" height="1" fill="#ff0000"/><rect x="1361" y="826" width="7" height="14" fill="#ff0000"/><rect x="1370" y="840" width="7" height="2" fill="#00ff00"/><rect x="1380" y="822" width="7" height="18" fill="#ff0000"/><rect x="1389" y="832" width="7" height="8" fill="#ff0000"/><rect x="1399" y="840" width="7" height="1" fill="#00ff00"/><rect x="1408" y="839" width="7" height="1" fill="#ff0000"/><rect x="1418" y="840" width="7" height="7" fill="#00ff00"/><rect x="1428" y="839" width="7" height="1" fill="#ff0000"/><rect x="1437" y="839" width="7" height="1" fill="#ff0000"/><rect x="1447" y="840" width="7" height="4" fill="#00ff00"/><rect x="1456" y="828" width="7" height="12" fill="#ff0000"/><rect x="1466" y="820" width="7" height="20" fill="#ff0000"/><rect x="1476" y="840" width="7" height="3" fill="#00ff00"/><rect x="1485" y="840" width="7" height="9" fill="#00ff00"/><rect x="1495" y="823" width="7" height="17" fill="#ff0000"/><rect x="1504" y="840" width="7" height="5" fill="#00ff00"/><rect x="1514" y="836" width="7" height="4" fill="#ff0000"/></g><text x="81" y="815.6" font-size="12" fill="#f2f2f2" text-anchor="end">5.61</text><text x="1529.5" y="815.6" font-size="12" fill="#f2f2f2">5.61</text><text x="81" y="853.8" font-size="12" fill="#f2f2f2" text-anchor="end">-1.19</text><text x="1529.5" y="853.8" font-size="12" fill="#f2f2f2">-1.19</text><polyline points="89.8,834.5 101.0,835.0 111.0,837.5 121.0,838.0 131.0,839.0 141.0,842.0 156.0,846.0 166.0,842.0 181.0,838.0 193.5,835.0 204.8,832.5 216.0,836.0 228.5,838.0 241.0,839.0 256.0,836.5 271.0,834.0 281.0,836.5 296.0,838.0 311.0,839.5 323.5,839.0 336.0,835.5 346.0,834.0 358.5,835.5 371.0,837.0 383.5,838.5 396.0,844.0 406.0,843.5 414.8,845.5 426.0,843.5 433.5,842.5 446.0,839.0 458.5,839.5 471.0,839.0 483.5,840.0 491.0,841.5 501.0,839.0 516.0,838.0 528.5,836.0 541.0,839.5 556.0,840.0 576.0,843.0 588.5,840.0 601.0,839.0 613.5,840.0 626.0,837.0 641.0,839.0 653.5,837.0 666.0,839.5 681.0,842.0 693.5,844.0 708.5,842.5 726.0,841.5 741.0,841.0 758.5,842.5 769.8,846.0 783.5,840.0 796.0,835.0 808.5,830.5 818.5,831.0 831.0,843.0 847.2,856.0 856.0,857.5 865.5,861.0 876.0,851.5 891.0,840.0 903.5,830.0 913.5,820.5 923.5,823.0 933.5,823.0 943.5,821.5 951.0,823.0 961.0,823.0 971.0,835.0 981.0,834.0 993.5,836.5 1009.8,842.5 1018.5,831.5 1028.5,837.0 1039.8,841.0 1048.5,840.0 1058.5,836.5 1073.5,837.0 1088.5,834.0 1106.0,836.0 1116.0,832.5 1124.8,830.5 1136.0,835.0 1143.5,841.0 1153.5,839.0 1163.5,846.5 1181.0,843.0 1193.5,837.0 1201.0,838.0 1211.0,834.5 1221.0,839.0 1233.5,844.0 1246.0,848.5 1258.5,847.5 1268.5,850.0 1277.2,851.0 1288.5,842.5 1303.5,840.0 1316.0,838.0 1326.0,836.5 1336.0,840.0 1356.0,839.0 1363.5,835.0 1373.5,835.5 1393.5,832.5 1406.0,834.0 1421.0,837.0 1436.0,841.0 1448.5,842.5 1456.2,840.0 1462.5,837.7 1468.8,834.5 1476.6,835.3 1487.5,836.9 1498.4,833.4 1507.8,836.1 1517.2,839.7" stroke="#ffff00" stroke-width="1.9" fill="none" stroke-linejoin="round"/><polyline points="89.8,841.0 108.5,838.5 133.5,839.0 158.5,839.5 183.5,837.0 208.5,836.5 233.5,837.5 258.5,836.5 283.5,837.5 308.5,838.0 333.5,836.5 358.5,835.5 383.5,837.5 408.5,838.0 433.5,838.5 458.5,839.0 483.5,839.5 501.0,840.0 551.0,839.5 601.0,839.5 651.0,838.5 676.0,840.0 701.0,841.5 726.0,841.0 751.0,840.5 771.0,841.0 801.0,838.0 826.0,841.0 851.0,843.5 865.5,844.0 888.5,841.5 913.5,839.0 938.5,836.5 961.0,834.5 971.0,837.0 981.0,836.5 1006.0,836.5 1031.0,834.0 1058.5,830.5 1081.0,833.5 1106.0,835.0 1131.0,836.0 1146.0,839.0 1168.5,837.5 1193.5,837.5 1218.5,838.0 1243.5,840.0 1268.5,841.5 1288.5,842.0 1306.0,842.0 1323.5,843.0 1343.5,840.5 1368.5,840.5 1393.5,840.0 1418.5,839.5 1443.5,840.0 1456.2,838.4 1465.6,836.2 1476.6,836.9 1487.5,837.8 1498.4,837.2 1507.8,836.2 1517.2,836.2" stroke="#8c008c" stroke-width="1.8" fill="none" stroke-linejoin="round"/><text x="86.5" y="910.6" font-size="12" fill="#f2f2f2">2023-10</text><text x="220.5" y="910.6" font-size="12" fill="#f2f2f2">11</text><text x="631.5" y="910.6" font-size="12" fill="#f2f2f2">2024-01</text><text x="842.5" y="910.6" font-size="12" fill="#f2f2f2">02</text><text x="986.5" y="910.6" font-size="12" fill="#f2f2f2">03</text><text x="1187.5" y="910.6" font-size="12" fill="#f2f2f2">04</text><text x="1379.5" y="910.6" font-size="12" fill="#f2f2f2">05</text><rect x="391" y="898" width="80" height="18" fill="#3a3f4b"/><text x="431" y="910.6" font-size="12" fill="#f2f2f2" text-anchor="middle">2023-11-30</text></svg>
<div class="a" style="left:21px;top:918px;width:75px;height:24px;background:#4a84ec"></div>
<div class="a ind" style="left:30px;font-size:14px;color:#d6e6ff">技术指标</div>
<div class="a ind" style="left:116px">模板</div>
<div class="a ind" style="left:165px">估值顶底</div>
<div class="a ind" style="left:249px">指标</div>
<div class="a ind" style="left:298px">沪深北向</div>
<div class="a ind" style="left:357px;color:#1b86e0">四季牛熊</div>
<div class="a ind" style="left:416px">流动量能</div>
<div class="a ind" style="left:475px">二八风格</div>
<div class="a ind" style="left:534px;color:#1b86e0">赚钱效应</div>
<div class="a ind" style="left:593px">趋势强度</div>
<div class="a ind" style="left:652px">仓位配置</div>
<div class="a ind" style="left:711px;color:#1b86e0">龙头高度</div>
<div class="a ind" style="left:770px;color:#1b86e0">核心风口</div>
<div class="a ind" style="left:829px">MA</div>
<div class="a ind" style="left:860px">VOL</div>
<div class="a ind" style="left:895px">MACD</div>
<div class="a" style="left:937px;top:922px;width:15px;height:15px;background:#4a4e5a"></div><svg style="left:941px;top:925px" width="8" height="10"><path d="M1.5 1L6 5L1.5 9" stroke="#c8c8c8" stroke-width="1.2" fill="none"/></svg>
<div class="a" style="left:1534px;top:921px;width:50px;height:18px;background:#4c5cb8;color:#fff;font-size:12px;line-height:18px;text-align:center">指标树</div><div class="a" id="rp"></div>
<div class="a" style="left:1918px;top:135px;width:2px;height:838px;background:#2b2e39"></div>
<div class="a" style="left:1589px;top:110px;width:164px;height:25px;background:#2b2e38;line-height:25px;text-align:center;font-size:14px;color:#f4f4f4">报价</div>
<div class="a" style="left:1752px;top:110px;width:1px;height:25px;background:#101216"></div>
<div class="a" style="left:1753px;top:110px;width:164px;height:25px;background:#e60012;line-height:25px;text-align:center;font-size:14px;color:#fff">策略</div>
<div class="a" style="left:1589px;top:134px;width:164px;height:1px;background:#101216"></div>
<div class="a rh" style="top:135px">大盘信号</div>
<div class="a rh" style="top:353px">仓位配置</div>
<div class="a rh" style="top:551px">资金流向</div>
<div class="a rh" style="top:789px">风格偏好</div>
<svg style="left:0;top:0" width="1920" height="1030"><circle cx="1671.5" cy="190.5" r="30.5" fill="#ff2e50"/><path d="M1671.5 171.0Q1664.0 176.8 1655.4 176.8V196.10000000000002Q1657.7 204.10000000000002 1671.5 209.9Q1685.3 204.10000000000002 1687.6 196.10000000000002V176.8Q1679.0 176.8 1671.5 171.0Z" fill="none" stroke="#1d1f25" stroke-width="2.8" stroke-linejoin="miter"/><text x="1671.5" y="195.9" font-size="15.5" fill="#1d1f25" text-anchor="middle">春</text><circle cx="1836.5" cy="190.5" r="30.5" fill="#625115"/><path d="M1836.5 171.0Q1829.0 176.8 1820.4 176.8V196.10000000000002Q1822.7 204.10000000000002 1836.5 209.9Q1850.3 204.10000000000002 1852.6 196.10000000000002V176.8Q1844.0 176.8 1836.5 171.0Z" fill="none" stroke="#1d1f25" stroke-width="2.8" stroke-linejoin="miter"/><text x="1836.5" y="195.9" font-size="15.5" fill="#1d1f25" text-anchor="middle">夏</text><circle cx="1671.5" cy="290.5" r="30.5" fill="#22503b"/><path d="M1671.5 271.0Q1664.0 276.8 1655.4 276.8V296.1Q1657.7 304.1 1671.5 309.90000000000003Q1685.3 304.1 1687.6 296.1V276.8Q1679.0 276.8 1671.5 271.0Z" fill="none" stroke="#1d1f25" stroke-width="2.8" stroke-linejoin="miter"/><text x="1671.5" y="295.90000000000003" font-size="15.5" fill="#1d1f25" text-anchor="middle">秋</text><circle cx="1836.5" cy="290.5" r="30.5" fill="#2a4467"/><path d="M1836.5 271.0Q1829.0 276.8 1820.4 276.8V296.1Q1822.7 304.1 1836.5 309.90000000000003Q1850.3 304.1 1852.6 296.1V276.8Q1844.0 276.8 1836.5 271.0Z" fill="none" stroke="#1d1f25" stroke-width="2.8" stroke-linejoin="miter"/><text x="1836.5" y="295.90000000000003" font-size="15.5" fill="#1d1f25" text-anchor="middle">冬</text><defs><linearGradient id="gg" gradientUnits="userSpaceOnUse" x1="1683" y1="0" x2="1827" y2="0"><stop offset="0" stop-color="#1c76c6"/><stop offset="0.12" stop-color="#2480c0"/><stop offset="0.5" stop-color="#f8d400"/><stop offset="0.78" stop-color="#f57a1a"/><stop offset="0.93" stop-color="#f23848"/><stop offset="1" stop-color="#f23848"/></linearGradient></defs><path d="M1703.07 506.52A71.2 71.2 0 0 1 1700.26 503.37" fill="none" stroke="#1f7cc0" stroke-width="4"/><path d="M1700.58 503.75A71.2 71.2 0 0 1 1697.94 500.45" fill="none" stroke="#1f7cc0" stroke-width="4"/><path d="M1698.24 500.85A71.2 71.2 0 0 1 1695.77 497.41" fill="none" stroke="#1f7cc0" stroke-width="4"/><path d="M1696.05 497.83A71.2 71.2 0 0 1 1693.77 494.27" fill="none" stroke="#1f7dc0" stroke-width="4"/><path d="M1694.03 494.70A71.2 71.2 0 0 1 1691.93 491.03" fill="none" stroke="#1f7dc0" stroke-width="4"/><path d="M1692.17 491.46A71.2 71.2 0 0 1 1690.27 487.69" fill="none" stroke="#1f7dc0" stroke-width="4"/><path d="M1690.48 488.14A71.2 71.2 0 0 1 1688.78 484.27" fill="none" stroke="#1f7dc1" stroke-width="4"/><path d="M1688.97 484.73A71.2 71.2 0 0 1 1687.48 480.78" fill="none" stroke="#1f7dc1" stroke-width="4"/><path d="M1687.64 481.25A71.2 71.2 0 0 1 1686.36 477.23" fill="none" stroke="#1f7ec1" stroke-width="4"/><path d="M1686.50 477.70A71.2 71.2 0 0 1 1685.42 473.62" fill="none" stroke="#1f7ec1" stroke-width="4"/><path d="M1685.54 474.10A71.2 71.2 0 0 1 1684.68 469.96" fill="none" stroke="#1f7ec1" stroke-width="4"/><path d="M1684.77 470.45A71.2 71.2 0 0 1 1684.13 466.28" fill="none" stroke="#207ec1" stroke-width="4"/><path d="M1684.19 466.77A71.2 71.2 0 0 1 1683.77 462.57" fill="none" stroke="#207ec1" stroke-width="4"/><path d="M1683.81 463.06A71.2 71.2 0 0 1 1683.61 458.84" fill="none" stroke="#207ec1" stroke-width="4"/><path d="M1683.62 459.34A71.2 71.2 0 0 1 1683.64 455.12" fill="none" stroke="#207fc1" stroke-width="4"/><path d="M1683.63 455.61A71.2 71.2 0 0 1 1683.87 451.39" fill="none" stroke="#207fc1" stroke-width="4"/><path d="M1683.83 451.89A71.2 71.2 0 0 1 1684.29 447.69" fill="none" stroke="#207fc1" stroke-width="4"/><path d="M1684.23 448.18A71.2 71.2 0 0 1 1684.91 444.01" fill="none" stroke="#207fc2" stroke-width="4"/><path d="M1684.82 444.50A71.2 71.2 0 0 1 1685.71 440.38" fill="none" stroke="#207fc2" stroke-width="4"/><path d="M1685.60 440.86A71.2 71.2 0 0 1 1686.71 436.78" fill="none" stroke="#207fc2" stroke-width="4"/><path d="M1686.57 437.26A71.2 71.2 0 0 1 1687.89 433.25" fill="none" stroke="#2080c2" stroke-width="4"/><path d="M1687.73 433.72A71.2 71.2 0 0 1 1689.26 429.78" fill="none" stroke="#2080c2" stroke-width="4"/><path d="M1689.07 430.24A71.2 71.2 0 0 1 1690.81 426.39" fill="none" stroke="#2180c1" stroke-width="4"/><path d="M1690.59 426.84A71.2 71.2 0 0 1 1692.53 423.08" fill="none" stroke="#2684be" stroke-width="4"/><path d="M1692.29 423.52A71.2 71.2 0 0 1 1694.42 419.87" fill="none" stroke="#2b86ba" stroke-width="4"/><path d="M1694.16 420.29A71.2 71.2 0 0 1 1696.48 416.76" fill="none" stroke="#318ab6" stroke-width="4"/><path d="M1696.19 417.17A71.2 71.2 0 0 1 1698.69 413.76" fill="none" stroke="#368cb2" stroke-width="4"/><path d="M1698.39 414.16A71.2 71.2 0 0 1 1701.06 410.89" fill="none" stroke="#3b90af" stroke-width="4"/><path d="M1700.74 411.26A71.2 71.2 0 0 1 1703.58 408.14" fill="none" stroke="#4794a5" stroke-width="4"/><path d="M1703.24 408.50A71.2 71.2 0 0 1 1706.24 405.53" fill="none" stroke="#539a99" stroke-width="4"/><path d="M1705.88 405.87A71.2 71.2 0 0 1 1709.03 403.06" fill="none" stroke="#609f8e" stroke-width="4"/><path d="M1708.65 403.38A71.2 71.2 0 0 1 1711.95 400.74" fill="none" stroke="#6da483" stroke-width="4"/><path d="M1711.55 401.04A71.2 71.2 0 0 1 1714.99 398.57" fill="none" stroke="#7aa978" stroke-width="4"/><path d="M1714.57 398.85A71.2 71.2 0 0 1 1718.13 396.57" fill="none" stroke="#88ae6c" stroke-width="4"/><path d="M1717.70 396.83A71.2 71.2 0 0 1 1721.37 394.73" fill="none" stroke="#96b361" stroke-width="4"/><path d="M1720.94 394.97A71.2 71.2 0 0 1 1724.71 393.07" fill="none" stroke="#a4b855" stroke-width="4"/><path d="M1724.26 393.28A71.2 71.2 0 0 1 1728.13 391.58" fill="none" stroke="#b2bc4a" stroke-width="4"/><path d="M1727.67 391.77A71.2 71.2 0 0 1 1731.62 390.28" fill="none" stroke="#c0c13e" stroke-width="4"/><path d="M1731.15 390.44A71.2 71.2 0 0 1 1735.17 389.16" fill="none" stroke="#cbc534" stroke-width="4"/><path d="M1734.70 389.30A71.2 71.2 0 0 1 1738.78 388.22" fill="none" stroke="#d5c929" stroke-width="4"/><path d="M1738.30 388.34A71.2 71.2 0 0 1 1742.44 387.48" fill="none" stroke="#e0cc1f" stroke-width="4"/><path d="M1741.95 387.57A71.2 71.2 0 0 1 1746.12 386.93" fill="none" stroke="#ebd015" stroke-width="4"/><path d="M1745.63 386.99A71.2 71.2 0 0 1 1749.83 386.57" fill="none" stroke="#f1d20d" stroke-width="4"/><path d="M1749.34 386.61A71.2 71.2 0 0 1 1753.56 386.41" fill="none" stroke="#f4d108" stroke-width="4"/><path d="M1753.06 386.42A71.2 71.2 0 0 1 1757.28 386.44" fill="none" stroke="#f7d003" stroke-width="4"/><path d="M1756.79 386.43A71.2 71.2 0 0 1 1761.01 386.67" fill="none" stroke="#f8cd01" stroke-width="4"/><path d="M1760.51 386.63A71.2 71.2 0 0 1 1764.71 387.09" fill="none" stroke="#f8c703" stroke-width="4"/><path d="M1764.22 387.03A71.2 71.2 0 0 1 1768.39 387.71" fill="none" stroke="#f8c005" stroke-width="4"/><path d="M1767.90 387.62A71.2 71.2 0 0 1 1772.02 388.51" fill="none" stroke="#f8ba08" stroke-width="4"/><path d="M1771.54 388.40A71.2 71.2 0 0 1 1775.62 389.51" fill="none" stroke="#f8b40a" stroke-width="4"/><path d="M1775.14 389.37A71.2 71.2 0 0 1 1779.15 390.69" fill="none" stroke="#f8ae0c" stroke-width="4"/><path d="M1778.68 390.53A71.2 71.2 0 0 1 1782.62 392.06" fill="none" stroke="#f8a80e" stroke-width="4"/><path d="M1782.16 391.87A71.2 71.2 0 0 1 1786.01 393.61" fill="none" stroke="#f8a110" stroke-width="4"/><path d="M1785.56 393.39A71.2 71.2 0 0 1 1789.32 395.33" fill="none" stroke="#f89b12" stroke-width="4"/><path d="M1788.88 395.09A71.2 71.2 0 0 1 1792.53 397.22" fill="none" stroke="#f89514" stroke-width="4"/><path d="M1792.11 396.96A71.2 71.2 0 0 1 1795.64 399.28" fill="none" stroke="#f88d18" stroke-width="4"/><path d="M1795.23 398.99A71.2 71.2 0 0 1 1798.64 401.49" fill="none" stroke="#f7861a" stroke-width="4"/><path d="M1798.24 401.19A71.2 71.2 0 0 1 1801.51 403.86" fill="none" stroke="#f77e1e" stroke-width="4"/><path d="M1801.14 403.54A71.2 71.2 0 0 1 1804.26 406.38" fill="none" stroke="#f77720" stroke-width="4"/><path d="M1803.90 406.04A71.2 71.2 0 0 1 1806.87 409.04" fill="none" stroke="#f66f24" stroke-width="4"/><path d="M1806.53 408.68A71.2 71.2 0 0 1 1809.34 411.83" fill="none" stroke="#f66826" stroke-width="4"/><path d="M1809.02 411.45A71.2 71.2 0 0 1 1811.66 414.75" fill="none" stroke="#f5602b" stroke-width="4"/><path d="M1811.36 414.35A71.2 71.2 0 0 1 1813.83 417.79" fill="none" stroke="#f45732" stroke-width="4"/><path d="M1813.55 417.37A71.2 71.2 0 0 1 1815.83 420.93" fill="none" stroke="#f34f39" stroke-width="4"/><path d="M1815.57 420.50A71.2 71.2 0 0 1 1817.67 424.17" fill="none" stroke="#f24740" stroke-width="4"/><path d="M1817.43 423.74A71.2 71.2 0 0 1 1819.33 427.51" fill="none" stroke="#f13e47" stroke-width="4"/><path d="M1819.12 427.06A71.2 71.2 0 0 1 1820.82 430.93" fill="none" stroke="#f03b49" stroke-width="4"/><path d="M1820.63 430.47A71.2 71.2 0 0 1 1822.12 434.42" fill="none" stroke="#f13d48" stroke-width="4"/><path d="M1821.96 433.95A71.2 71.2 0 0 1 1823.24 437.97" fill="none" stroke="#f23e46" stroke-width="4"/><path d="M1823.10 437.50A71.2 71.2 0 0 1 1824.18 441.58" fill="none" stroke="#f24045" stroke-width="4"/><path d="M1824.06 441.10A71.2 71.2 0 0 1 1824.92 445.24" fill="none" stroke="#f34244" stroke-width="4"/><path d="M1824.83 444.75A71.2 71.2 0 0 1 1825.47 448.92" fill="none" stroke="#f44442" stroke-width="4"/><path d="M1825.41 448.43A71.2 71.2 0 0 1 1825.83 452.63" fill="none" stroke="#f54740" stroke-width="4"/><path d="M1825.79 452.14A71.2 71.2 0 0 1 1825.99 456.36" fill="none" stroke="#f64a3e" stroke-width="4"/><path d="M1825.98 455.86A71.2 71.2 0 0 1 1825.96 460.08" fill="none" stroke="#f74d3b" stroke-width="4"/><path d="M1825.97 459.59A71.2 71.2 0 0 1 1825.73 463.81" fill="none" stroke="#f85039" stroke-width="4"/><path d="M1825.77 463.31A71.2 71.2 0 0 1 1825.31 467.51" fill="none" stroke="#f75338" stroke-width="4"/><path d="M1825.37 467.02A71.2 71.2 0 0 1 1824.69 471.19" fill="none" stroke="#f55637" stroke-width="4"/><path d="M1824.78 470.70A71.2 71.2 0 0 1 1823.89 474.82" fill="none" stroke="#f45836" stroke-width="4"/><path d="M1824.00 474.34A71.2 71.2 0 0 1 1822.89 478.42" fill="none" stroke="#f25a36" stroke-width="4"/><path d="M1823.03 477.94A71.2 71.2 0 0 1 1821.71 481.95" fill="none" stroke="#f05d35" stroke-width="4"/><path d="M1821.87 481.48A71.2 71.2 0 0 1 1820.34 485.42" fill="none" stroke="#ee5f35" stroke-width="4"/><path d="M1820.53 484.96A71.2 71.2 0 0 1 1818.79 488.81" fill="none" stroke="#ec6234" stroke-width="4"/><path d="M1819.01 488.36A71.2 71.2 0 0 1 1817.07 492.12" fill="none" stroke="#e76437" stroke-width="4"/><path d="M1817.31 491.68A71.2 71.2 0 0 1 1815.18 495.33" fill="none" stroke="#e0663a" stroke-width="4"/><path d="M1815.44 494.91A71.2 71.2 0 0 1 1813.12 498.44" fill="none" stroke="#da693d" stroke-width="4"/><path d="M1813.41 498.03A71.2 71.2 0 0 1 1810.91 501.44" fill="none" stroke="#d46b41" stroke-width="4"/><path d="M1811.21 501.04A71.2 71.2 0 0 1 1808.54 504.31" fill="none" stroke="#cd6d44" stroke-width="4"/><path d="M1808.86 503.94A71.2 71.2 0 0 1 1806.87 506.16" fill="none" stroke="#c86f47" stroke-width="4"/><path d="M1703.01 505.38L1710.93 499.94" stroke="#e0e0e0" stroke-width="1.8"/><path d="M1686.50 471.88L1695.58 471.88" stroke="#e0e0e0" stroke-width="1.8"/><path d="M1693.60 425.34L1702.51 428.64" stroke="#e0e0e0" stroke-width="1.8"/><path d="M1753.02 389.03L1753.02 398.93" stroke="#e0e0e0" stroke-width="1.8"/><path d="M1815.24 424.51L1806.66 429.79" stroke="#e0e0e0" stroke-width="1.8"/><path d="M1822.67 471.22L1813.26 471.22" stroke="#e0e0e0" stroke-width="1.8"/><path d="M1806.99 504.56L1798.40 499.94" stroke="#e0e0e0" stroke-width="1.8"/><text x="1753.3" y="413.7" font-size="11.5" fill="#b4b4b4" text-anchor="middle">50</text><text x="1713.2" y="434.8" font-size="11.5" fill="#b4b4b4" text-anchor="middle">25</text><text x="1794.8" y="436.8" font-size="11.5" fill="#b4b4b4" text-anchor="middle">75</text><text x="1706.6" y="476.7" font-size="11.5" fill="#b4b4b4" text-anchor="middle">10</text><text x="1711.3" y="495.7" font-size="11.5" fill="#b4b4b4" text-anchor="middle">0</text><text x="1788.8" y="495.7" font-size="11.5" fill="#b4b4b4" text-anchor="middle">100</text><circle cx="1754.8" cy="457.0" r="6" fill="#ff2e50"/><polygon points="1760.4,469.9 1767.0,464.1 1784.2,489.2" fill="#ff2e50"/><rect x="1599" y="577" width="8" height="8" fill="#ff2e50"/><rect x="1667" y="577" width="8" height="8" fill="#3cc87e"/><rect x="1599" y="749" width="310" height="1" fill="#3a3d47"/><rect x="1614" y="723" width="30" height="26" fill="#0ec04f" shape-rendering="crispEdges"/><text x="1629" y="716.4" font-size="12" fill="#14c152" text-anchor="middle">50.7亿</text><text x="1629" y="763.2" font-size="13" fill="#a6a6a6" text-anchor="middle" dx="2.2">05-20</text><rect x="1675" y="673" width="30" height="76" fill="#0ec04f" shape-rendering="crispEdges"/><text x="1690" y="666.4" font-size="12" fill="#14c152" text-anchor="middle">146.4亿</text><text x="1690" y="763.2" font-size="13" fill="#a6a6a6" text-anchor="middle" dx="2.2">05-21</text><rect x="1736" y="728" width="30" height="21" fill="#0ec04f" shape-rendering="crispEdges"/><text x="1751" y="721.4" font-size="12" fill="#14c152" text-anchor="middle">41.8亿</text><text x="1751" y="763.2" font-size="13" fill="#a6a6a6" text-anchor="middle" dx="2.2">05-22</text><rect x="1797" y="637" width="30" height="112" fill="#0ec04f" shape-rendering="crispEdges"/><text x="1812" y="630.4" font-size="12" fill="#14c152" text-anchor="middle">213.5亿</text><text x="1812" y="763.2" font-size="13" fill="#a6a6a6" text-anchor="middle" dx="2.2">05-23</text><rect x="1858" y="722" width="30" height="27" fill="#0ec04f" shape-rendering="crispEdges"/><text x="1873" y="715.4" font-size="12" fill="#14c152" text-anchor="middle">51.5亿</text><text x="1873" y="763.2" font-size="13" fill="#a6a6a6" text-anchor="middle" dx="2.2">05-24</text><path d="M1660.00 912.00A93.5 93.5 0 0 1 1694.03 839.85L1714.95 872.08A55.5 55.5 0 0 0 1698.00 912.00Z" fill="#ff2e50"/><path d="M1694.03 839.85A93.5 93.5 0 0 1 1812.97 839.85L1792.05 872.08A55.5 55.5 0 0 0 1714.95 872.08Z" fill="#ffcc00"/><path d="M1812.97 839.85A93.5 93.5 0 0 1 1847.00 912.00L1809.00 912.00A55.5 55.5 0 0 0 1792.05 872.08Z" fill="#3cc87e"/><polygon points="1750.3,906.3 1755.4,918 1820.4,882" fill="#fff"/><rect x="1662" y="937.5" width="8" height="8" fill="#ff2e50"/><rect x="1730" y="937.5" width="8" height="8" fill="#ffcc00"/><rect x="1788" y="937.5" width="8" height="8" fill="#3cc87e"/></svg>
<div class="a sg" style="left:1611.5px;top:225px;color:#ff2e50">红色上涨区域</div>
<div class="a sg" style="left:1776.5px;top:225px;color:#f7c600">黄色震荡区域</div>
<div class="a sg" style="left:1611.5px;top:325px;color:#2ec46c">绿色下跌区域</div>
<div class="a sg" style="left:1776.5px;top:325px;color:#4a90f2">蓝色反弹区域</div>
<div class="a rt" style="left:1707.5px;top:523px;color:#a6a6a6;letter-spacing:0.4px">今日仓位：</div><div class="a rt" style="left:1770px;top:523px;color:#ff2e50">100%</div>
<div class="a rt" style="left:1613px;top:574px;color:#9e9e9e">主力流入</div><div class="a rt" style="left:1681px;top:574px;color:#9e9e9e">主力流出</div>
<div class="a rt" style="left:1682.5px;top:933.5px;color:#ff2e50">大盘股</div><div class="a rt" style="left:1745px;top:933.5px;color:#ffcc00">小盘股</div><div class="a rt" style="left:1803px;top:933.5px;color:#3cc87e">无偏好</div><div class="a" id="bt"></div><div class="a" id="btb"></div>
<div class="a" style="left:0;top:945px;width:71px;height:27px;background:#2b2d38"></div>
<div class="a" style="left:71px;top:945px;width:1px;height:27px;background:#101216"></div>
<div class="a" style="left:72px;top:945px;width:100px;height:27px;background:#2b2d38"></div>
<svg style="left:11px;top:951px" width="15" height="15" viewBox="0 0 15 15"><rect x="0.6" y="0.6" width="13.6" height="13.6" fill="none" stroke="#8a8e98" stroke-width="1.2"/><path d="M4 3.6H10.8M7.4 11.6V5.4M4.8 8L7.4 5.4L10 8" stroke="#8a8e98" stroke-width="1.2" fill="none"/></svg>
<div class="a" style="left:33px;top:945px;height:27px;line-height:28px;font-size:14px;color:#8a8e98">展开</div>
<div class="a" style="left:72px;top:945px;width:100px;height:27px;line-height:28px;font-size:14px;color:#f2f2f2;text-align:center">成分股</div>
<div class="a" style="left:172px;top:945px;width:100px;height:27px;line-height:28px;font-size:14px;color:#fff;text-align:center;background:#de0024">新闻</div>
<div class="a" style="left:1514px;top:949px;width:65px;height:20px;background:#3f70b6;color:#dce8fa;font-size:12px;line-height:20px;text-align:center">市场风向</div>
<div class="a" id="ib"></div><div class="a" id="tk"></div>
<div class="a" style="left:1589px;top:972px;width:331px;height:1px;background:#2c2f39"></div>
<div class="a" style="left:0;top:973px;width:2px;height:57px;background:#2e303c"></div>
<div class="a it" style="left:12.5px;color:#f2f2f2">上证指数:</div>
<div class="a it" style="left:75.8px;color:#1fdc46">3114.39</div>
<div class="a it" style="left:135px;color:#1fdc46">-2.00</div>
<div class="a it" style="left:175.8px;color:#1fdc46">-0.06%</div>
<div class="a it" style="left:228.8px;color:#2492f2">1886.14亿</div>
<div class="a it" style="left:382.5px;color:#f2f2f2">深证成指:</div>
<div class="a it" style="left:445.8px;color:#1fdc46">9513.96</div>
<div class="a it" style="left:505.4px;color:#1fdc46">-27.68</div>
<div class="a it" style="left:554px;color:#1fdc46">-0.29%</div>
<div class="a it" style="left:607px;color:#2492f2">2682.46亿</div>
<div class="a it" style="left:762px;color:#f2f2f2">创业板指:</div>
<div class="a it" style="left:825.8px;color:#1fdc46">1840.62</div>
<div class="a it" style="left:884.6px;color:#1fdc46">-11.45</div>
<div class="a it" style="left:933px;color:#1fdc46">-0.62%</div>
<div class="a it" style="left:986px;color:#2492f2">1251.96亿</div>
<div class="a it" style="left:1140.8px;color:#f2f2f2">科创50:</div>
<div class="a it" style="left:1192.5px;color:#1fdc46">738.40</div>
<div class="a it" style="left:1243px;color:#1fdc46">-4.00</div>
<div class="a it" style="left:1284.6px;color:#1fdc46">-0.54%</div>
<div class="a it" style="left:1336.7px;color:#2492f2">271.16亿</div>
<div class="a tk" style="left:10px;letter-spacing:-0.14px">公告称，H16富力4等6只公司债券将自202...</div>
<div class="a tk" style="left:340px">11:04 上海：到2025年绿电交易规模达到50亿千瓦时以上</div>
<div class="a tk" style="left:752px">11:00 西北太平洋今年首个台风即将生成</div>
<div class="a tk" style="left:1061.7px">10:59 盘面直击</div>
<div class="a tk" style="left:1216.7px">10:54 资金流向</div>
<div class="a tk" style="left:1371.7px">10:46 中国—波兰经济联委会第</div>
<div class="a" style="left:1595px;top:1006px;width:250px;height:24px;background:#3a3e4a"></div>
<svg style="left:1600px;top:1010px" width="16" height="16" viewBox="0 0 16 16"><circle cx="6.6" cy="6.6" r="5.4" fill="none" stroke="#a0a4ac" stroke-width="1.4"/><path d="M10.6 10.6L14.6 14.6" stroke="#a0a4ac" stroke-width="1.6"/></svg>
<div class="a" style="left:1622px;top:1006px;height:24px;line-height:25px;font-size:12.5px;color:#8a8e98">股票代码/名称/首字母</div>
<svg style="left:1850px;top:1013px" width="16" height="11"><rect x="0" y="6.5" width="3" height="4" fill="#4de0a0"/><rect x="5.6" y="3.5" width="3" height="7" fill="#4de0a0"/><rect x="11.2" y="0" width="3" height="10.5" fill="#4de0a0"/></svg>
<div class="a" style="left:1870px;top:1004px;height:27px;line-height:28px;font-size:12px;color:#e0e0e0">已连接</div>
<svg style="left:1872px;top:980px" width="15" height="15" viewBox="0 0 15 15"><path d="M7.5 0.4L14 3V8Q14 12 7.5 14.6Q1 12 1 8V3Z" fill="#d9a23c"/><path d="M9 2.8L4.6 8.2H7.2L6 12.2L10.6 6.6H7.8Z" fill="#1a1b20"/></svg>
<svg style="left:1894px;top:979px" width="16" height="17" viewBox="0 0 16 17"><path d="M8 1Q3.4 1.6 3.4 7V10.4L1.2 13.2H14.8L12.6 10.4V7Q12.6 1.6 8 1Z" fill="#f0694f"/><path d="M6.2 14.4H9.8L8 16.4Z" fill="#f0694f"/></svg>
</body></html>
